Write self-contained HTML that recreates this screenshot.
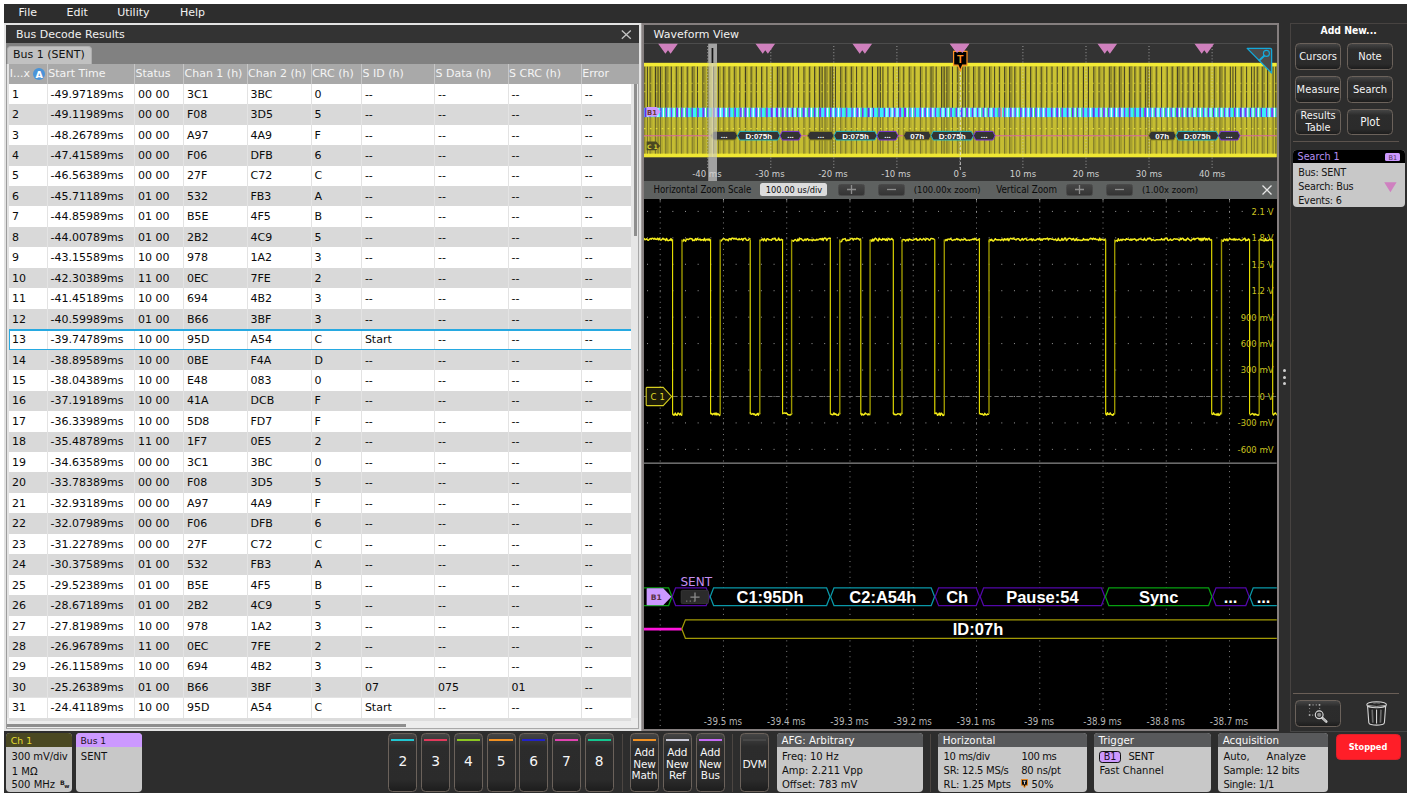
<!DOCTYPE html>
<html lang="en"><head><meta charset="utf-8"><title>Bus Decode Results - Waveform View</title>
<style>
html,body{margin:0;padding:0;background:#fff;}
body{width:1410px;height:795px;position:relative;overflow:hidden;font-family:"DejaVu Sans","Liberation Sans",sans-serif;}
div{position:absolute;box-sizing:border-box;}
svg{position:absolute;overflow:visible;}
.t{white-space:nowrap;}
.btn{border:1px solid #6b625b;border-radius:4.5px;background:linear-gradient(#454545 0,#2c2c2c 22%,#2b2b2b 80%,#1d1d1d 100%);}
.badge{border-radius:4px;background:#c8c8c8;overflow:hidden;}
.bh{left:0;top:0;width:100%;background:#58595b;}
</style></head><body>

<div style="left:4.00px;top:4.00px;width:1403.30px;height:788.60px;background:#2d2d2d;"></div>
<div class="t" style="left:18.60px;top:3.00px;font:normal 11px/20px 'DejaVu Sans','Liberation Sans',sans-serif;color:#f2f2f2;">File</div>
<div class="t" style="left:66.60px;top:3.00px;font:normal 11px/20px 'DejaVu Sans','Liberation Sans',sans-serif;color:#f2f2f2;">Edit</div>
<div class="t" style="left:117.20px;top:3.00px;font:normal 11px/20px 'DejaVu Sans','Liberation Sans',sans-serif;color:#f2f2f2;">Utility</div>
<div class="t" style="left:180.00px;top:3.00px;font:normal 11px/20px 'DejaVu Sans','Liberation Sans',sans-serif;color:#f2f2f2;">Help</div>
<div style="left:4.00px;top:23.00px;width:637.20px;height:708.00px;background:#e3e3e3;"></div>
<div style="left:6.20px;top:25.20px;width:632.60px;height:18.00px;background:#333333;"></div>
<div class="t" style="left:16.00px;top:25.00px;font:normal 11px/20px 'DejaVu Sans','Liberation Sans',sans-serif;color:#f0f0f0;">Bus Decode Results</div>
<svg style="left:621px;top:30px" width="11" height="10" viewBox="0 0 11 10"><path d="M0.8 0.6 L9.8 8.8 M9.8 0.6 L0.8 8.8" stroke="#c4c4c4" stroke-width="1.3" fill="none"/></svg>
<div style="left:6.20px;top:43.20px;width:632.60px;height:20.80px;background:#818181;"></div>
<div style="left:6.50px;top:45.70px;width:85.00px;height:18.70px;background:#c1c1c1;border:1px solid #adadad;border-bottom:none;border-radius:4px 4px 0 0;"></div>
<div class="t" style="left:13.00px;top:45.00px;font:normal 11px/20px 'DejaVu Sans','Liberation Sans',sans-serif;color:#111;">Bus 1 (SENT)</div>
<div style="left:6.10px;top:64.00px;width:1.00px;height:664.90px;background:#9c9c9c;"></div>
<div style="left:8.50px;top:64.00px;width:630.30px;height:19.70px;background:#a9a9a9;"></div>
<div class="t" style="left:9.70px;top:64.00px;font:normal 11px/20px 'DejaVu Sans','Liberation Sans',sans-serif;color:#f4f4f4;">I...x</div>
<div style="left:46.70px;top:64.00px;width:1.00px;height:19.70px;background:#c6c6c6;"></div>
<div class="t" style="left:48.20px;top:64.00px;font:normal 11px/20px 'DejaVu Sans','Liberation Sans',sans-serif;color:#f4f4f4;">Start Time</div>
<div style="left:134.00px;top:64.00px;width:1.00px;height:19.70px;background:#c6c6c6;"></div>
<div class="t" style="left:135.50px;top:64.00px;font:normal 11px/20px 'DejaVu Sans','Liberation Sans',sans-serif;color:#f4f4f4;">Status</div>
<div style="left:183.00px;top:64.00px;width:1.00px;height:19.70px;background:#c6c6c6;"></div>
<div class="t" style="left:184.50px;top:64.00px;font:normal 11px/20px 'DejaVu Sans','Liberation Sans',sans-serif;color:#f4f4f4;">Chan 1 (h)</div>
<div style="left:246.60px;top:64.00px;width:1.00px;height:19.70px;background:#c6c6c6;"></div>
<div class="t" style="left:248.10px;top:64.00px;font:normal 11px/20px 'DejaVu Sans','Liberation Sans',sans-serif;color:#f4f4f4;">Chan 2 (h)</div>
<div style="left:310.70px;top:64.00px;width:1.00px;height:19.70px;background:#c6c6c6;"></div>
<div class="t" style="left:312.20px;top:64.00px;font:normal 11px/20px 'DejaVu Sans','Liberation Sans',sans-serif;color:#f4f4f4;">CRC (h)</div>
<div style="left:361.00px;top:64.00px;width:1.00px;height:19.70px;background:#c6c6c6;"></div>
<div class="t" style="left:362.50px;top:64.00px;font:normal 11px/20px 'DejaVu Sans','Liberation Sans',sans-serif;color:#f4f4f4;">S ID (h)</div>
<div style="left:434.10px;top:64.00px;width:1.00px;height:19.70px;background:#c6c6c6;"></div>
<div class="t" style="left:435.60px;top:64.00px;font:normal 11px/20px 'DejaVu Sans','Liberation Sans',sans-serif;color:#f4f4f4;">S Data (h)</div>
<div style="left:507.60px;top:64.00px;width:1.00px;height:19.70px;background:#c6c6c6;"></div>
<div class="t" style="left:509.10px;top:64.00px;font:normal 11px/20px 'DejaVu Sans','Liberation Sans',sans-serif;color:#f4f4f4;">S CRC (h)</div>
<div style="left:580.80px;top:64.00px;width:1.00px;height:19.70px;background:#c6c6c6;"></div>
<div class="t" style="left:582.30px;top:64.00px;font:normal 11px/20px 'DejaVu Sans','Liberation Sans',sans-serif;color:#f4f4f4;">Error</div>
<div style="left:33.20px;top:67.60px;width:12.00px;height:12.00px;background:#4a94d8;border-radius:50%;"></div>
<div class="t" style="left:-110.80px;width:300px;text-align:center;top:65.00px;font:bold 9.5px/20px 'DejaVu Sans','Liberation Sans',sans-serif;color:#fff;">A</div>
<div style="left:8.50px;top:83.70px;width:622.30px;height:20.46px;background:#ffffff;"></div>
<div class="t" style="left:12.10px;top:85.00px;font:normal 11px/20px 'DejaVu Sans','Liberation Sans',sans-serif;color:#0a0a0a;">1</div>
<div class="t" style="left:50.60px;top:85.00px;font:normal 11px/20px 'DejaVu Sans','Liberation Sans',sans-serif;color:#0a0a0a;">-49.97189ms</div>
<div class="t" style="left:137.90px;top:85.00px;font:normal 11px/20px 'DejaVu Sans','Liberation Sans',sans-serif;color:#0a0a0a;">00 00</div>
<div class="t" style="left:186.90px;top:85.00px;font:normal 11px/20px 'DejaVu Sans','Liberation Sans',sans-serif;color:#0a0a0a;">3C1</div>
<div class="t" style="left:250.50px;top:85.00px;font:normal 11px/20px 'DejaVu Sans','Liberation Sans',sans-serif;color:#0a0a0a;">3BC</div>
<div class="t" style="left:314.60px;top:85.00px;font:normal 11px/20px 'DejaVu Sans','Liberation Sans',sans-serif;color:#0a0a0a;">0</div>
<div class="t" style="left:364.90px;top:85.00px;font:normal 11px/20px 'DejaVu Sans','Liberation Sans',sans-serif;color:#0a0a0a;">--</div>
<div class="t" style="left:438.00px;top:85.00px;font:normal 11px/20px 'DejaVu Sans','Liberation Sans',sans-serif;color:#0a0a0a;">--</div>
<div class="t" style="left:511.50px;top:85.00px;font:normal 11px/20px 'DejaVu Sans','Liberation Sans',sans-serif;color:#0a0a0a;">--</div>
<div class="t" style="left:584.70px;top:85.00px;font:normal 11px/20px 'DejaVu Sans','Liberation Sans',sans-serif;color:#0a0a0a;">--</div>
<div style="left:8.50px;top:104.16px;width:622.30px;height:20.46px;background:#d9d9d9;"></div>
<div class="t" style="left:12.10px;top:105.00px;font:normal 11px/20px 'DejaVu Sans','Liberation Sans',sans-serif;color:#0a0a0a;">2</div>
<div class="t" style="left:50.60px;top:105.00px;font:normal 11px/20px 'DejaVu Sans','Liberation Sans',sans-serif;color:#0a0a0a;">-49.11989ms</div>
<div class="t" style="left:137.90px;top:105.00px;font:normal 11px/20px 'DejaVu Sans','Liberation Sans',sans-serif;color:#0a0a0a;">00 00</div>
<div class="t" style="left:186.90px;top:105.00px;font:normal 11px/20px 'DejaVu Sans','Liberation Sans',sans-serif;color:#0a0a0a;">F08</div>
<div class="t" style="left:250.50px;top:105.00px;font:normal 11px/20px 'DejaVu Sans','Liberation Sans',sans-serif;color:#0a0a0a;">3D5</div>
<div class="t" style="left:314.60px;top:105.00px;font:normal 11px/20px 'DejaVu Sans','Liberation Sans',sans-serif;color:#0a0a0a;">5</div>
<div class="t" style="left:364.90px;top:105.00px;font:normal 11px/20px 'DejaVu Sans','Liberation Sans',sans-serif;color:#0a0a0a;">--</div>
<div class="t" style="left:438.00px;top:105.00px;font:normal 11px/20px 'DejaVu Sans','Liberation Sans',sans-serif;color:#0a0a0a;">--</div>
<div class="t" style="left:511.50px;top:105.00px;font:normal 11px/20px 'DejaVu Sans','Liberation Sans',sans-serif;color:#0a0a0a;">--</div>
<div class="t" style="left:584.70px;top:105.00px;font:normal 11px/20px 'DejaVu Sans','Liberation Sans',sans-serif;color:#0a0a0a;">--</div>
<div style="left:8.50px;top:124.62px;width:622.30px;height:20.46px;background:#ffffff;"></div>
<div class="t" style="left:12.10px;top:126.00px;font:normal 11px/20px 'DejaVu Sans','Liberation Sans',sans-serif;color:#0a0a0a;">3</div>
<div class="t" style="left:50.60px;top:126.00px;font:normal 11px/20px 'DejaVu Sans','Liberation Sans',sans-serif;color:#0a0a0a;">-48.26789ms</div>
<div class="t" style="left:137.90px;top:126.00px;font:normal 11px/20px 'DejaVu Sans','Liberation Sans',sans-serif;color:#0a0a0a;">00 00</div>
<div class="t" style="left:186.90px;top:126.00px;font:normal 11px/20px 'DejaVu Sans','Liberation Sans',sans-serif;color:#0a0a0a;">A97</div>
<div class="t" style="left:250.50px;top:126.00px;font:normal 11px/20px 'DejaVu Sans','Liberation Sans',sans-serif;color:#0a0a0a;">4A9</div>
<div class="t" style="left:314.60px;top:126.00px;font:normal 11px/20px 'DejaVu Sans','Liberation Sans',sans-serif;color:#0a0a0a;">F</div>
<div class="t" style="left:364.90px;top:126.00px;font:normal 11px/20px 'DejaVu Sans','Liberation Sans',sans-serif;color:#0a0a0a;">--</div>
<div class="t" style="left:438.00px;top:126.00px;font:normal 11px/20px 'DejaVu Sans','Liberation Sans',sans-serif;color:#0a0a0a;">--</div>
<div class="t" style="left:511.50px;top:126.00px;font:normal 11px/20px 'DejaVu Sans','Liberation Sans',sans-serif;color:#0a0a0a;">--</div>
<div class="t" style="left:584.70px;top:126.00px;font:normal 11px/20px 'DejaVu Sans','Liberation Sans',sans-serif;color:#0a0a0a;">--</div>
<div style="left:8.50px;top:145.08px;width:622.30px;height:20.46px;background:#d9d9d9;"></div>
<div class="t" style="left:12.10px;top:146.00px;font:normal 11px/20px 'DejaVu Sans','Liberation Sans',sans-serif;color:#0a0a0a;">4</div>
<div class="t" style="left:50.60px;top:146.00px;font:normal 11px/20px 'DejaVu Sans','Liberation Sans',sans-serif;color:#0a0a0a;">-47.41589ms</div>
<div class="t" style="left:137.90px;top:146.00px;font:normal 11px/20px 'DejaVu Sans','Liberation Sans',sans-serif;color:#0a0a0a;">00 00</div>
<div class="t" style="left:186.90px;top:146.00px;font:normal 11px/20px 'DejaVu Sans','Liberation Sans',sans-serif;color:#0a0a0a;">F06</div>
<div class="t" style="left:250.50px;top:146.00px;font:normal 11px/20px 'DejaVu Sans','Liberation Sans',sans-serif;color:#0a0a0a;">DFB</div>
<div class="t" style="left:314.60px;top:146.00px;font:normal 11px/20px 'DejaVu Sans','Liberation Sans',sans-serif;color:#0a0a0a;">6</div>
<div class="t" style="left:364.90px;top:146.00px;font:normal 11px/20px 'DejaVu Sans','Liberation Sans',sans-serif;color:#0a0a0a;">--</div>
<div class="t" style="left:438.00px;top:146.00px;font:normal 11px/20px 'DejaVu Sans','Liberation Sans',sans-serif;color:#0a0a0a;">--</div>
<div class="t" style="left:511.50px;top:146.00px;font:normal 11px/20px 'DejaVu Sans','Liberation Sans',sans-serif;color:#0a0a0a;">--</div>
<div class="t" style="left:584.70px;top:146.00px;font:normal 11px/20px 'DejaVu Sans','Liberation Sans',sans-serif;color:#0a0a0a;">--</div>
<div style="left:8.50px;top:165.54px;width:622.30px;height:20.46px;background:#ffffff;"></div>
<div class="t" style="left:12.10px;top:166.00px;font:normal 11px/20px 'DejaVu Sans','Liberation Sans',sans-serif;color:#0a0a0a;">5</div>
<div class="t" style="left:50.60px;top:166.00px;font:normal 11px/20px 'DejaVu Sans','Liberation Sans',sans-serif;color:#0a0a0a;">-46.56389ms</div>
<div class="t" style="left:137.90px;top:166.00px;font:normal 11px/20px 'DejaVu Sans','Liberation Sans',sans-serif;color:#0a0a0a;">00 00</div>
<div class="t" style="left:186.90px;top:166.00px;font:normal 11px/20px 'DejaVu Sans','Liberation Sans',sans-serif;color:#0a0a0a;">27F</div>
<div class="t" style="left:250.50px;top:166.00px;font:normal 11px/20px 'DejaVu Sans','Liberation Sans',sans-serif;color:#0a0a0a;">C72</div>
<div class="t" style="left:314.60px;top:166.00px;font:normal 11px/20px 'DejaVu Sans','Liberation Sans',sans-serif;color:#0a0a0a;">C</div>
<div class="t" style="left:364.90px;top:166.00px;font:normal 11px/20px 'DejaVu Sans','Liberation Sans',sans-serif;color:#0a0a0a;">--</div>
<div class="t" style="left:438.00px;top:166.00px;font:normal 11px/20px 'DejaVu Sans','Liberation Sans',sans-serif;color:#0a0a0a;">--</div>
<div class="t" style="left:511.50px;top:166.00px;font:normal 11px/20px 'DejaVu Sans','Liberation Sans',sans-serif;color:#0a0a0a;">--</div>
<div class="t" style="left:584.70px;top:166.00px;font:normal 11px/20px 'DejaVu Sans','Liberation Sans',sans-serif;color:#0a0a0a;">--</div>
<div style="left:8.50px;top:186.00px;width:622.30px;height:20.46px;background:#d9d9d9;"></div>
<div class="t" style="left:12.10px;top:187.00px;font:normal 11px/20px 'DejaVu Sans','Liberation Sans',sans-serif;color:#0a0a0a;">6</div>
<div class="t" style="left:50.60px;top:187.00px;font:normal 11px/20px 'DejaVu Sans','Liberation Sans',sans-serif;color:#0a0a0a;">-45.71189ms</div>
<div class="t" style="left:137.90px;top:187.00px;font:normal 11px/20px 'DejaVu Sans','Liberation Sans',sans-serif;color:#0a0a0a;">01 00</div>
<div class="t" style="left:186.90px;top:187.00px;font:normal 11px/20px 'DejaVu Sans','Liberation Sans',sans-serif;color:#0a0a0a;">532</div>
<div class="t" style="left:250.50px;top:187.00px;font:normal 11px/20px 'DejaVu Sans','Liberation Sans',sans-serif;color:#0a0a0a;">FB3</div>
<div class="t" style="left:314.60px;top:187.00px;font:normal 11px/20px 'DejaVu Sans','Liberation Sans',sans-serif;color:#0a0a0a;">A</div>
<div class="t" style="left:364.90px;top:187.00px;font:normal 11px/20px 'DejaVu Sans','Liberation Sans',sans-serif;color:#0a0a0a;">--</div>
<div class="t" style="left:438.00px;top:187.00px;font:normal 11px/20px 'DejaVu Sans','Liberation Sans',sans-serif;color:#0a0a0a;">--</div>
<div class="t" style="left:511.50px;top:187.00px;font:normal 11px/20px 'DejaVu Sans','Liberation Sans',sans-serif;color:#0a0a0a;">--</div>
<div class="t" style="left:584.70px;top:187.00px;font:normal 11px/20px 'DejaVu Sans','Liberation Sans',sans-serif;color:#0a0a0a;">--</div>
<div style="left:8.50px;top:206.46px;width:622.30px;height:20.46px;background:#ffffff;"></div>
<div class="t" style="left:12.10px;top:207.00px;font:normal 11px/20px 'DejaVu Sans','Liberation Sans',sans-serif;color:#0a0a0a;">7</div>
<div class="t" style="left:50.60px;top:207.00px;font:normal 11px/20px 'DejaVu Sans','Liberation Sans',sans-serif;color:#0a0a0a;">-44.85989ms</div>
<div class="t" style="left:137.90px;top:207.00px;font:normal 11px/20px 'DejaVu Sans','Liberation Sans',sans-serif;color:#0a0a0a;">01 00</div>
<div class="t" style="left:186.90px;top:207.00px;font:normal 11px/20px 'DejaVu Sans','Liberation Sans',sans-serif;color:#0a0a0a;">B5E</div>
<div class="t" style="left:250.50px;top:207.00px;font:normal 11px/20px 'DejaVu Sans','Liberation Sans',sans-serif;color:#0a0a0a;">4F5</div>
<div class="t" style="left:314.60px;top:207.00px;font:normal 11px/20px 'DejaVu Sans','Liberation Sans',sans-serif;color:#0a0a0a;">B</div>
<div class="t" style="left:364.90px;top:207.00px;font:normal 11px/20px 'DejaVu Sans','Liberation Sans',sans-serif;color:#0a0a0a;">--</div>
<div class="t" style="left:438.00px;top:207.00px;font:normal 11px/20px 'DejaVu Sans','Liberation Sans',sans-serif;color:#0a0a0a;">--</div>
<div class="t" style="left:511.50px;top:207.00px;font:normal 11px/20px 'DejaVu Sans','Liberation Sans',sans-serif;color:#0a0a0a;">--</div>
<div class="t" style="left:584.70px;top:207.00px;font:normal 11px/20px 'DejaVu Sans','Liberation Sans',sans-serif;color:#0a0a0a;">--</div>
<div style="left:8.50px;top:226.92px;width:622.30px;height:20.46px;background:#d9d9d9;"></div>
<div class="t" style="left:12.10px;top:228.00px;font:normal 11px/20px 'DejaVu Sans','Liberation Sans',sans-serif;color:#0a0a0a;">8</div>
<div class="t" style="left:50.60px;top:228.00px;font:normal 11px/20px 'DejaVu Sans','Liberation Sans',sans-serif;color:#0a0a0a;">-44.00789ms</div>
<div class="t" style="left:137.90px;top:228.00px;font:normal 11px/20px 'DejaVu Sans','Liberation Sans',sans-serif;color:#0a0a0a;">01 00</div>
<div class="t" style="left:186.90px;top:228.00px;font:normal 11px/20px 'DejaVu Sans','Liberation Sans',sans-serif;color:#0a0a0a;">2B2</div>
<div class="t" style="left:250.50px;top:228.00px;font:normal 11px/20px 'DejaVu Sans','Liberation Sans',sans-serif;color:#0a0a0a;">4C9</div>
<div class="t" style="left:314.60px;top:228.00px;font:normal 11px/20px 'DejaVu Sans','Liberation Sans',sans-serif;color:#0a0a0a;">5</div>
<div class="t" style="left:364.90px;top:228.00px;font:normal 11px/20px 'DejaVu Sans','Liberation Sans',sans-serif;color:#0a0a0a;">--</div>
<div class="t" style="left:438.00px;top:228.00px;font:normal 11px/20px 'DejaVu Sans','Liberation Sans',sans-serif;color:#0a0a0a;">--</div>
<div class="t" style="left:511.50px;top:228.00px;font:normal 11px/20px 'DejaVu Sans','Liberation Sans',sans-serif;color:#0a0a0a;">--</div>
<div class="t" style="left:584.70px;top:228.00px;font:normal 11px/20px 'DejaVu Sans','Liberation Sans',sans-serif;color:#0a0a0a;">--</div>
<div style="left:8.50px;top:247.38px;width:622.30px;height:20.46px;background:#ffffff;"></div>
<div class="t" style="left:12.10px;top:248.00px;font:normal 11px/20px 'DejaVu Sans','Liberation Sans',sans-serif;color:#0a0a0a;">9</div>
<div class="t" style="left:50.60px;top:248.00px;font:normal 11px/20px 'DejaVu Sans','Liberation Sans',sans-serif;color:#0a0a0a;">-43.15589ms</div>
<div class="t" style="left:137.90px;top:248.00px;font:normal 11px/20px 'DejaVu Sans','Liberation Sans',sans-serif;color:#0a0a0a;">10 00</div>
<div class="t" style="left:186.90px;top:248.00px;font:normal 11px/20px 'DejaVu Sans','Liberation Sans',sans-serif;color:#0a0a0a;">978</div>
<div class="t" style="left:250.50px;top:248.00px;font:normal 11px/20px 'DejaVu Sans','Liberation Sans',sans-serif;color:#0a0a0a;">1A2</div>
<div class="t" style="left:314.60px;top:248.00px;font:normal 11px/20px 'DejaVu Sans','Liberation Sans',sans-serif;color:#0a0a0a;">3</div>
<div class="t" style="left:364.90px;top:248.00px;font:normal 11px/20px 'DejaVu Sans','Liberation Sans',sans-serif;color:#0a0a0a;">--</div>
<div class="t" style="left:438.00px;top:248.00px;font:normal 11px/20px 'DejaVu Sans','Liberation Sans',sans-serif;color:#0a0a0a;">--</div>
<div class="t" style="left:511.50px;top:248.00px;font:normal 11px/20px 'DejaVu Sans','Liberation Sans',sans-serif;color:#0a0a0a;">--</div>
<div class="t" style="left:584.70px;top:248.00px;font:normal 11px/20px 'DejaVu Sans','Liberation Sans',sans-serif;color:#0a0a0a;">--</div>
<div style="left:8.50px;top:267.84px;width:622.30px;height:20.46px;background:#d9d9d9;"></div>
<div class="t" style="left:12.10px;top:269.00px;font:normal 11px/20px 'DejaVu Sans','Liberation Sans',sans-serif;color:#0a0a0a;">10</div>
<div class="t" style="left:50.60px;top:269.00px;font:normal 11px/20px 'DejaVu Sans','Liberation Sans',sans-serif;color:#0a0a0a;">-42.30389ms</div>
<div class="t" style="left:137.90px;top:269.00px;font:normal 11px/20px 'DejaVu Sans','Liberation Sans',sans-serif;color:#0a0a0a;">11 00</div>
<div class="t" style="left:186.90px;top:269.00px;font:normal 11px/20px 'DejaVu Sans','Liberation Sans',sans-serif;color:#0a0a0a;">0EC</div>
<div class="t" style="left:250.50px;top:269.00px;font:normal 11px/20px 'DejaVu Sans','Liberation Sans',sans-serif;color:#0a0a0a;">7FE</div>
<div class="t" style="left:314.60px;top:269.00px;font:normal 11px/20px 'DejaVu Sans','Liberation Sans',sans-serif;color:#0a0a0a;">2</div>
<div class="t" style="left:364.90px;top:269.00px;font:normal 11px/20px 'DejaVu Sans','Liberation Sans',sans-serif;color:#0a0a0a;">--</div>
<div class="t" style="left:438.00px;top:269.00px;font:normal 11px/20px 'DejaVu Sans','Liberation Sans',sans-serif;color:#0a0a0a;">--</div>
<div class="t" style="left:511.50px;top:269.00px;font:normal 11px/20px 'DejaVu Sans','Liberation Sans',sans-serif;color:#0a0a0a;">--</div>
<div class="t" style="left:584.70px;top:269.00px;font:normal 11px/20px 'DejaVu Sans','Liberation Sans',sans-serif;color:#0a0a0a;">--</div>
<div style="left:8.50px;top:288.30px;width:622.30px;height:20.46px;background:#ffffff;"></div>
<div class="t" style="left:12.10px;top:289.00px;font:normal 11px/20px 'DejaVu Sans','Liberation Sans',sans-serif;color:#0a0a0a;">11</div>
<div class="t" style="left:50.60px;top:289.00px;font:normal 11px/20px 'DejaVu Sans','Liberation Sans',sans-serif;color:#0a0a0a;">-41.45189ms</div>
<div class="t" style="left:137.90px;top:289.00px;font:normal 11px/20px 'DejaVu Sans','Liberation Sans',sans-serif;color:#0a0a0a;">10 00</div>
<div class="t" style="left:186.90px;top:289.00px;font:normal 11px/20px 'DejaVu Sans','Liberation Sans',sans-serif;color:#0a0a0a;">694</div>
<div class="t" style="left:250.50px;top:289.00px;font:normal 11px/20px 'DejaVu Sans','Liberation Sans',sans-serif;color:#0a0a0a;">4B2</div>
<div class="t" style="left:314.60px;top:289.00px;font:normal 11px/20px 'DejaVu Sans','Liberation Sans',sans-serif;color:#0a0a0a;">3</div>
<div class="t" style="left:364.90px;top:289.00px;font:normal 11px/20px 'DejaVu Sans','Liberation Sans',sans-serif;color:#0a0a0a;">--</div>
<div class="t" style="left:438.00px;top:289.00px;font:normal 11px/20px 'DejaVu Sans','Liberation Sans',sans-serif;color:#0a0a0a;">--</div>
<div class="t" style="left:511.50px;top:289.00px;font:normal 11px/20px 'DejaVu Sans','Liberation Sans',sans-serif;color:#0a0a0a;">--</div>
<div class="t" style="left:584.70px;top:289.00px;font:normal 11px/20px 'DejaVu Sans','Liberation Sans',sans-serif;color:#0a0a0a;">--</div>
<div style="left:8.50px;top:308.76px;width:622.30px;height:20.46px;background:#d9d9d9;"></div>
<div class="t" style="left:12.10px;top:310.00px;font:normal 11px/20px 'DejaVu Sans','Liberation Sans',sans-serif;color:#0a0a0a;">12</div>
<div class="t" style="left:50.60px;top:310.00px;font:normal 11px/20px 'DejaVu Sans','Liberation Sans',sans-serif;color:#0a0a0a;">-40.59989ms</div>
<div class="t" style="left:137.90px;top:310.00px;font:normal 11px/20px 'DejaVu Sans','Liberation Sans',sans-serif;color:#0a0a0a;">01 00</div>
<div class="t" style="left:186.90px;top:310.00px;font:normal 11px/20px 'DejaVu Sans','Liberation Sans',sans-serif;color:#0a0a0a;">B66</div>
<div class="t" style="left:250.50px;top:310.00px;font:normal 11px/20px 'DejaVu Sans','Liberation Sans',sans-serif;color:#0a0a0a;">3BF</div>
<div class="t" style="left:314.60px;top:310.00px;font:normal 11px/20px 'DejaVu Sans','Liberation Sans',sans-serif;color:#0a0a0a;">3</div>
<div class="t" style="left:364.90px;top:310.00px;font:normal 11px/20px 'DejaVu Sans','Liberation Sans',sans-serif;color:#0a0a0a;">--</div>
<div class="t" style="left:438.00px;top:310.00px;font:normal 11px/20px 'DejaVu Sans','Liberation Sans',sans-serif;color:#0a0a0a;">--</div>
<div class="t" style="left:511.50px;top:310.00px;font:normal 11px/20px 'DejaVu Sans','Liberation Sans',sans-serif;color:#0a0a0a;">--</div>
<div class="t" style="left:584.70px;top:310.00px;font:normal 11px/20px 'DejaVu Sans','Liberation Sans',sans-serif;color:#0a0a0a;">--</div>
<div style="left:8.50px;top:329.22px;width:622.30px;height:20.46px;background:#ffffff;"></div>
<div class="t" style="left:12.10px;top:330.00px;font:normal 11px/20px 'DejaVu Sans','Liberation Sans',sans-serif;color:#0a0a0a;">13</div>
<div class="t" style="left:50.60px;top:330.00px;font:normal 11px/20px 'DejaVu Sans','Liberation Sans',sans-serif;color:#0a0a0a;">-39.74789ms</div>
<div class="t" style="left:137.90px;top:330.00px;font:normal 11px/20px 'DejaVu Sans','Liberation Sans',sans-serif;color:#0a0a0a;">10 00</div>
<div class="t" style="left:186.90px;top:330.00px;font:normal 11px/20px 'DejaVu Sans','Liberation Sans',sans-serif;color:#0a0a0a;">95D</div>
<div class="t" style="left:250.50px;top:330.00px;font:normal 11px/20px 'DejaVu Sans','Liberation Sans',sans-serif;color:#0a0a0a;">A54</div>
<div class="t" style="left:314.60px;top:330.00px;font:normal 11px/20px 'DejaVu Sans','Liberation Sans',sans-serif;color:#0a0a0a;">C</div>
<div class="t" style="left:364.90px;top:330.00px;font:normal 11px/20px 'DejaVu Sans','Liberation Sans',sans-serif;color:#0a0a0a;">Start</div>
<div class="t" style="left:438.00px;top:330.00px;font:normal 11px/20px 'DejaVu Sans','Liberation Sans',sans-serif;color:#0a0a0a;">--</div>
<div class="t" style="left:511.50px;top:330.00px;font:normal 11px/20px 'DejaVu Sans','Liberation Sans',sans-serif;color:#0a0a0a;">--</div>
<div class="t" style="left:584.70px;top:330.00px;font:normal 11px/20px 'DejaVu Sans','Liberation Sans',sans-serif;color:#0a0a0a;">--</div>
<div style="left:8.50px;top:349.68px;width:622.30px;height:20.46px;background:#d9d9d9;"></div>
<div class="t" style="left:12.10px;top:351.00px;font:normal 11px/20px 'DejaVu Sans','Liberation Sans',sans-serif;color:#0a0a0a;">14</div>
<div class="t" style="left:50.60px;top:351.00px;font:normal 11px/20px 'DejaVu Sans','Liberation Sans',sans-serif;color:#0a0a0a;">-38.89589ms</div>
<div class="t" style="left:137.90px;top:351.00px;font:normal 11px/20px 'DejaVu Sans','Liberation Sans',sans-serif;color:#0a0a0a;">10 00</div>
<div class="t" style="left:186.90px;top:351.00px;font:normal 11px/20px 'DejaVu Sans','Liberation Sans',sans-serif;color:#0a0a0a;">0BE</div>
<div class="t" style="left:250.50px;top:351.00px;font:normal 11px/20px 'DejaVu Sans','Liberation Sans',sans-serif;color:#0a0a0a;">F4A</div>
<div class="t" style="left:314.60px;top:351.00px;font:normal 11px/20px 'DejaVu Sans','Liberation Sans',sans-serif;color:#0a0a0a;">D</div>
<div class="t" style="left:364.90px;top:351.00px;font:normal 11px/20px 'DejaVu Sans','Liberation Sans',sans-serif;color:#0a0a0a;">--</div>
<div class="t" style="left:438.00px;top:351.00px;font:normal 11px/20px 'DejaVu Sans','Liberation Sans',sans-serif;color:#0a0a0a;">--</div>
<div class="t" style="left:511.50px;top:351.00px;font:normal 11px/20px 'DejaVu Sans','Liberation Sans',sans-serif;color:#0a0a0a;">--</div>
<div class="t" style="left:584.70px;top:351.00px;font:normal 11px/20px 'DejaVu Sans','Liberation Sans',sans-serif;color:#0a0a0a;">--</div>
<div style="left:8.50px;top:370.14px;width:622.30px;height:20.46px;background:#ffffff;"></div>
<div class="t" style="left:12.10px;top:371.00px;font:normal 11px/20px 'DejaVu Sans','Liberation Sans',sans-serif;color:#0a0a0a;">15</div>
<div class="t" style="left:50.60px;top:371.00px;font:normal 11px/20px 'DejaVu Sans','Liberation Sans',sans-serif;color:#0a0a0a;">-38.04389ms</div>
<div class="t" style="left:137.90px;top:371.00px;font:normal 11px/20px 'DejaVu Sans','Liberation Sans',sans-serif;color:#0a0a0a;">10 00</div>
<div class="t" style="left:186.90px;top:371.00px;font:normal 11px/20px 'DejaVu Sans','Liberation Sans',sans-serif;color:#0a0a0a;">E48</div>
<div class="t" style="left:250.50px;top:371.00px;font:normal 11px/20px 'DejaVu Sans','Liberation Sans',sans-serif;color:#0a0a0a;">083</div>
<div class="t" style="left:314.60px;top:371.00px;font:normal 11px/20px 'DejaVu Sans','Liberation Sans',sans-serif;color:#0a0a0a;">0</div>
<div class="t" style="left:364.90px;top:371.00px;font:normal 11px/20px 'DejaVu Sans','Liberation Sans',sans-serif;color:#0a0a0a;">--</div>
<div class="t" style="left:438.00px;top:371.00px;font:normal 11px/20px 'DejaVu Sans','Liberation Sans',sans-serif;color:#0a0a0a;">--</div>
<div class="t" style="left:511.50px;top:371.00px;font:normal 11px/20px 'DejaVu Sans','Liberation Sans',sans-serif;color:#0a0a0a;">--</div>
<div class="t" style="left:584.70px;top:371.00px;font:normal 11px/20px 'DejaVu Sans','Liberation Sans',sans-serif;color:#0a0a0a;">--</div>
<div style="left:8.50px;top:390.60px;width:622.30px;height:20.46px;background:#d9d9d9;"></div>
<div class="t" style="left:12.10px;top:391.00px;font:normal 11px/20px 'DejaVu Sans','Liberation Sans',sans-serif;color:#0a0a0a;">16</div>
<div class="t" style="left:50.60px;top:391.00px;font:normal 11px/20px 'DejaVu Sans','Liberation Sans',sans-serif;color:#0a0a0a;">-37.19189ms</div>
<div class="t" style="left:137.90px;top:391.00px;font:normal 11px/20px 'DejaVu Sans','Liberation Sans',sans-serif;color:#0a0a0a;">10 00</div>
<div class="t" style="left:186.90px;top:391.00px;font:normal 11px/20px 'DejaVu Sans','Liberation Sans',sans-serif;color:#0a0a0a;">41A</div>
<div class="t" style="left:250.50px;top:391.00px;font:normal 11px/20px 'DejaVu Sans','Liberation Sans',sans-serif;color:#0a0a0a;">DCB</div>
<div class="t" style="left:314.60px;top:391.00px;font:normal 11px/20px 'DejaVu Sans','Liberation Sans',sans-serif;color:#0a0a0a;">F</div>
<div class="t" style="left:364.90px;top:391.00px;font:normal 11px/20px 'DejaVu Sans','Liberation Sans',sans-serif;color:#0a0a0a;">--</div>
<div class="t" style="left:438.00px;top:391.00px;font:normal 11px/20px 'DejaVu Sans','Liberation Sans',sans-serif;color:#0a0a0a;">--</div>
<div class="t" style="left:511.50px;top:391.00px;font:normal 11px/20px 'DejaVu Sans','Liberation Sans',sans-serif;color:#0a0a0a;">--</div>
<div class="t" style="left:584.70px;top:391.00px;font:normal 11px/20px 'DejaVu Sans','Liberation Sans',sans-serif;color:#0a0a0a;">--</div>
<div style="left:8.50px;top:411.06px;width:622.30px;height:20.46px;background:#ffffff;"></div>
<div class="t" style="left:12.10px;top:412.00px;font:normal 11px/20px 'DejaVu Sans','Liberation Sans',sans-serif;color:#0a0a0a;">17</div>
<div class="t" style="left:50.60px;top:412.00px;font:normal 11px/20px 'DejaVu Sans','Liberation Sans',sans-serif;color:#0a0a0a;">-36.33989ms</div>
<div class="t" style="left:137.90px;top:412.00px;font:normal 11px/20px 'DejaVu Sans','Liberation Sans',sans-serif;color:#0a0a0a;">10 00</div>
<div class="t" style="left:186.90px;top:412.00px;font:normal 11px/20px 'DejaVu Sans','Liberation Sans',sans-serif;color:#0a0a0a;">5D8</div>
<div class="t" style="left:250.50px;top:412.00px;font:normal 11px/20px 'DejaVu Sans','Liberation Sans',sans-serif;color:#0a0a0a;">FD7</div>
<div class="t" style="left:314.60px;top:412.00px;font:normal 11px/20px 'DejaVu Sans','Liberation Sans',sans-serif;color:#0a0a0a;">F</div>
<div class="t" style="left:364.90px;top:412.00px;font:normal 11px/20px 'DejaVu Sans','Liberation Sans',sans-serif;color:#0a0a0a;">--</div>
<div class="t" style="left:438.00px;top:412.00px;font:normal 11px/20px 'DejaVu Sans','Liberation Sans',sans-serif;color:#0a0a0a;">--</div>
<div class="t" style="left:511.50px;top:412.00px;font:normal 11px/20px 'DejaVu Sans','Liberation Sans',sans-serif;color:#0a0a0a;">--</div>
<div class="t" style="left:584.70px;top:412.00px;font:normal 11px/20px 'DejaVu Sans','Liberation Sans',sans-serif;color:#0a0a0a;">--</div>
<div style="left:8.50px;top:431.52px;width:622.30px;height:20.46px;background:#d9d9d9;"></div>
<div class="t" style="left:12.10px;top:432.00px;font:normal 11px/20px 'DejaVu Sans','Liberation Sans',sans-serif;color:#0a0a0a;">18</div>
<div class="t" style="left:50.60px;top:432.00px;font:normal 11px/20px 'DejaVu Sans','Liberation Sans',sans-serif;color:#0a0a0a;">-35.48789ms</div>
<div class="t" style="left:137.90px;top:432.00px;font:normal 11px/20px 'DejaVu Sans','Liberation Sans',sans-serif;color:#0a0a0a;">11 00</div>
<div class="t" style="left:186.90px;top:432.00px;font:normal 11px/20px 'DejaVu Sans','Liberation Sans',sans-serif;color:#0a0a0a;">1F7</div>
<div class="t" style="left:250.50px;top:432.00px;font:normal 11px/20px 'DejaVu Sans','Liberation Sans',sans-serif;color:#0a0a0a;">0E5</div>
<div class="t" style="left:314.60px;top:432.00px;font:normal 11px/20px 'DejaVu Sans','Liberation Sans',sans-serif;color:#0a0a0a;">2</div>
<div class="t" style="left:364.90px;top:432.00px;font:normal 11px/20px 'DejaVu Sans','Liberation Sans',sans-serif;color:#0a0a0a;">--</div>
<div class="t" style="left:438.00px;top:432.00px;font:normal 11px/20px 'DejaVu Sans','Liberation Sans',sans-serif;color:#0a0a0a;">--</div>
<div class="t" style="left:511.50px;top:432.00px;font:normal 11px/20px 'DejaVu Sans','Liberation Sans',sans-serif;color:#0a0a0a;">--</div>
<div class="t" style="left:584.70px;top:432.00px;font:normal 11px/20px 'DejaVu Sans','Liberation Sans',sans-serif;color:#0a0a0a;">--</div>
<div style="left:8.50px;top:451.98px;width:622.30px;height:20.46px;background:#ffffff;"></div>
<div class="t" style="left:12.10px;top:453.00px;font:normal 11px/20px 'DejaVu Sans','Liberation Sans',sans-serif;color:#0a0a0a;">19</div>
<div class="t" style="left:50.60px;top:453.00px;font:normal 11px/20px 'DejaVu Sans','Liberation Sans',sans-serif;color:#0a0a0a;">-34.63589ms</div>
<div class="t" style="left:137.90px;top:453.00px;font:normal 11px/20px 'DejaVu Sans','Liberation Sans',sans-serif;color:#0a0a0a;">00 00</div>
<div class="t" style="left:186.90px;top:453.00px;font:normal 11px/20px 'DejaVu Sans','Liberation Sans',sans-serif;color:#0a0a0a;">3C1</div>
<div class="t" style="left:250.50px;top:453.00px;font:normal 11px/20px 'DejaVu Sans','Liberation Sans',sans-serif;color:#0a0a0a;">3BC</div>
<div class="t" style="left:314.60px;top:453.00px;font:normal 11px/20px 'DejaVu Sans','Liberation Sans',sans-serif;color:#0a0a0a;">0</div>
<div class="t" style="left:364.90px;top:453.00px;font:normal 11px/20px 'DejaVu Sans','Liberation Sans',sans-serif;color:#0a0a0a;">--</div>
<div class="t" style="left:438.00px;top:453.00px;font:normal 11px/20px 'DejaVu Sans','Liberation Sans',sans-serif;color:#0a0a0a;">--</div>
<div class="t" style="left:511.50px;top:453.00px;font:normal 11px/20px 'DejaVu Sans','Liberation Sans',sans-serif;color:#0a0a0a;">--</div>
<div class="t" style="left:584.70px;top:453.00px;font:normal 11px/20px 'DejaVu Sans','Liberation Sans',sans-serif;color:#0a0a0a;">--</div>
<div style="left:8.50px;top:472.44px;width:622.30px;height:20.46px;background:#d9d9d9;"></div>
<div class="t" style="left:12.10px;top:473.00px;font:normal 11px/20px 'DejaVu Sans','Liberation Sans',sans-serif;color:#0a0a0a;">20</div>
<div class="t" style="left:50.60px;top:473.00px;font:normal 11px/20px 'DejaVu Sans','Liberation Sans',sans-serif;color:#0a0a0a;">-33.78389ms</div>
<div class="t" style="left:137.90px;top:473.00px;font:normal 11px/20px 'DejaVu Sans','Liberation Sans',sans-serif;color:#0a0a0a;">00 00</div>
<div class="t" style="left:186.90px;top:473.00px;font:normal 11px/20px 'DejaVu Sans','Liberation Sans',sans-serif;color:#0a0a0a;">F08</div>
<div class="t" style="left:250.50px;top:473.00px;font:normal 11px/20px 'DejaVu Sans','Liberation Sans',sans-serif;color:#0a0a0a;">3D5</div>
<div class="t" style="left:314.60px;top:473.00px;font:normal 11px/20px 'DejaVu Sans','Liberation Sans',sans-serif;color:#0a0a0a;">5</div>
<div class="t" style="left:364.90px;top:473.00px;font:normal 11px/20px 'DejaVu Sans','Liberation Sans',sans-serif;color:#0a0a0a;">--</div>
<div class="t" style="left:438.00px;top:473.00px;font:normal 11px/20px 'DejaVu Sans','Liberation Sans',sans-serif;color:#0a0a0a;">--</div>
<div class="t" style="left:511.50px;top:473.00px;font:normal 11px/20px 'DejaVu Sans','Liberation Sans',sans-serif;color:#0a0a0a;">--</div>
<div class="t" style="left:584.70px;top:473.00px;font:normal 11px/20px 'DejaVu Sans','Liberation Sans',sans-serif;color:#0a0a0a;">--</div>
<div style="left:8.50px;top:492.90px;width:622.30px;height:20.46px;background:#ffffff;"></div>
<div class="t" style="left:12.10px;top:494.00px;font:normal 11px/20px 'DejaVu Sans','Liberation Sans',sans-serif;color:#0a0a0a;">21</div>
<div class="t" style="left:50.60px;top:494.00px;font:normal 11px/20px 'DejaVu Sans','Liberation Sans',sans-serif;color:#0a0a0a;">-32.93189ms</div>
<div class="t" style="left:137.90px;top:494.00px;font:normal 11px/20px 'DejaVu Sans','Liberation Sans',sans-serif;color:#0a0a0a;">00 00</div>
<div class="t" style="left:186.90px;top:494.00px;font:normal 11px/20px 'DejaVu Sans','Liberation Sans',sans-serif;color:#0a0a0a;">A97</div>
<div class="t" style="left:250.50px;top:494.00px;font:normal 11px/20px 'DejaVu Sans','Liberation Sans',sans-serif;color:#0a0a0a;">4A9</div>
<div class="t" style="left:314.60px;top:494.00px;font:normal 11px/20px 'DejaVu Sans','Liberation Sans',sans-serif;color:#0a0a0a;">F</div>
<div class="t" style="left:364.90px;top:494.00px;font:normal 11px/20px 'DejaVu Sans','Liberation Sans',sans-serif;color:#0a0a0a;">--</div>
<div class="t" style="left:438.00px;top:494.00px;font:normal 11px/20px 'DejaVu Sans','Liberation Sans',sans-serif;color:#0a0a0a;">--</div>
<div class="t" style="left:511.50px;top:494.00px;font:normal 11px/20px 'DejaVu Sans','Liberation Sans',sans-serif;color:#0a0a0a;">--</div>
<div class="t" style="left:584.70px;top:494.00px;font:normal 11px/20px 'DejaVu Sans','Liberation Sans',sans-serif;color:#0a0a0a;">--</div>
<div style="left:8.50px;top:513.36px;width:622.30px;height:20.46px;background:#d9d9d9;"></div>
<div class="t" style="left:12.10px;top:514.00px;font:normal 11px/20px 'DejaVu Sans','Liberation Sans',sans-serif;color:#0a0a0a;">22</div>
<div class="t" style="left:50.60px;top:514.00px;font:normal 11px/20px 'DejaVu Sans','Liberation Sans',sans-serif;color:#0a0a0a;">-32.07989ms</div>
<div class="t" style="left:137.90px;top:514.00px;font:normal 11px/20px 'DejaVu Sans','Liberation Sans',sans-serif;color:#0a0a0a;">00 00</div>
<div class="t" style="left:186.90px;top:514.00px;font:normal 11px/20px 'DejaVu Sans','Liberation Sans',sans-serif;color:#0a0a0a;">F06</div>
<div class="t" style="left:250.50px;top:514.00px;font:normal 11px/20px 'DejaVu Sans','Liberation Sans',sans-serif;color:#0a0a0a;">DFB</div>
<div class="t" style="left:314.60px;top:514.00px;font:normal 11px/20px 'DejaVu Sans','Liberation Sans',sans-serif;color:#0a0a0a;">6</div>
<div class="t" style="left:364.90px;top:514.00px;font:normal 11px/20px 'DejaVu Sans','Liberation Sans',sans-serif;color:#0a0a0a;">--</div>
<div class="t" style="left:438.00px;top:514.00px;font:normal 11px/20px 'DejaVu Sans','Liberation Sans',sans-serif;color:#0a0a0a;">--</div>
<div class="t" style="left:511.50px;top:514.00px;font:normal 11px/20px 'DejaVu Sans','Liberation Sans',sans-serif;color:#0a0a0a;">--</div>
<div class="t" style="left:584.70px;top:514.00px;font:normal 11px/20px 'DejaVu Sans','Liberation Sans',sans-serif;color:#0a0a0a;">--</div>
<div style="left:8.50px;top:533.82px;width:622.30px;height:20.46px;background:#ffffff;"></div>
<div class="t" style="left:12.10px;top:535.00px;font:normal 11px/20px 'DejaVu Sans','Liberation Sans',sans-serif;color:#0a0a0a;">23</div>
<div class="t" style="left:50.60px;top:535.00px;font:normal 11px/20px 'DejaVu Sans','Liberation Sans',sans-serif;color:#0a0a0a;">-31.22789ms</div>
<div class="t" style="left:137.90px;top:535.00px;font:normal 11px/20px 'DejaVu Sans','Liberation Sans',sans-serif;color:#0a0a0a;">00 00</div>
<div class="t" style="left:186.90px;top:535.00px;font:normal 11px/20px 'DejaVu Sans','Liberation Sans',sans-serif;color:#0a0a0a;">27F</div>
<div class="t" style="left:250.50px;top:535.00px;font:normal 11px/20px 'DejaVu Sans','Liberation Sans',sans-serif;color:#0a0a0a;">C72</div>
<div class="t" style="left:314.60px;top:535.00px;font:normal 11px/20px 'DejaVu Sans','Liberation Sans',sans-serif;color:#0a0a0a;">C</div>
<div class="t" style="left:364.90px;top:535.00px;font:normal 11px/20px 'DejaVu Sans','Liberation Sans',sans-serif;color:#0a0a0a;">--</div>
<div class="t" style="left:438.00px;top:535.00px;font:normal 11px/20px 'DejaVu Sans','Liberation Sans',sans-serif;color:#0a0a0a;">--</div>
<div class="t" style="left:511.50px;top:535.00px;font:normal 11px/20px 'DejaVu Sans','Liberation Sans',sans-serif;color:#0a0a0a;">--</div>
<div class="t" style="left:584.70px;top:535.00px;font:normal 11px/20px 'DejaVu Sans','Liberation Sans',sans-serif;color:#0a0a0a;">--</div>
<div style="left:8.50px;top:554.28px;width:622.30px;height:20.46px;background:#d9d9d9;"></div>
<div class="t" style="left:12.10px;top:555.00px;font:normal 11px/20px 'DejaVu Sans','Liberation Sans',sans-serif;color:#0a0a0a;">24</div>
<div class="t" style="left:50.60px;top:555.00px;font:normal 11px/20px 'DejaVu Sans','Liberation Sans',sans-serif;color:#0a0a0a;">-30.37589ms</div>
<div class="t" style="left:137.90px;top:555.00px;font:normal 11px/20px 'DejaVu Sans','Liberation Sans',sans-serif;color:#0a0a0a;">01 00</div>
<div class="t" style="left:186.90px;top:555.00px;font:normal 11px/20px 'DejaVu Sans','Liberation Sans',sans-serif;color:#0a0a0a;">532</div>
<div class="t" style="left:250.50px;top:555.00px;font:normal 11px/20px 'DejaVu Sans','Liberation Sans',sans-serif;color:#0a0a0a;">FB3</div>
<div class="t" style="left:314.60px;top:555.00px;font:normal 11px/20px 'DejaVu Sans','Liberation Sans',sans-serif;color:#0a0a0a;">A</div>
<div class="t" style="left:364.90px;top:555.00px;font:normal 11px/20px 'DejaVu Sans','Liberation Sans',sans-serif;color:#0a0a0a;">--</div>
<div class="t" style="left:438.00px;top:555.00px;font:normal 11px/20px 'DejaVu Sans','Liberation Sans',sans-serif;color:#0a0a0a;">--</div>
<div class="t" style="left:511.50px;top:555.00px;font:normal 11px/20px 'DejaVu Sans','Liberation Sans',sans-serif;color:#0a0a0a;">--</div>
<div class="t" style="left:584.70px;top:555.00px;font:normal 11px/20px 'DejaVu Sans','Liberation Sans',sans-serif;color:#0a0a0a;">--</div>
<div style="left:8.50px;top:574.74px;width:622.30px;height:20.46px;background:#ffffff;"></div>
<div class="t" style="left:12.10px;top:576.00px;font:normal 11px/20px 'DejaVu Sans','Liberation Sans',sans-serif;color:#0a0a0a;">25</div>
<div class="t" style="left:50.60px;top:576.00px;font:normal 11px/20px 'DejaVu Sans','Liberation Sans',sans-serif;color:#0a0a0a;">-29.52389ms</div>
<div class="t" style="left:137.90px;top:576.00px;font:normal 11px/20px 'DejaVu Sans','Liberation Sans',sans-serif;color:#0a0a0a;">01 00</div>
<div class="t" style="left:186.90px;top:576.00px;font:normal 11px/20px 'DejaVu Sans','Liberation Sans',sans-serif;color:#0a0a0a;">B5E</div>
<div class="t" style="left:250.50px;top:576.00px;font:normal 11px/20px 'DejaVu Sans','Liberation Sans',sans-serif;color:#0a0a0a;">4F5</div>
<div class="t" style="left:314.60px;top:576.00px;font:normal 11px/20px 'DejaVu Sans','Liberation Sans',sans-serif;color:#0a0a0a;">B</div>
<div class="t" style="left:364.90px;top:576.00px;font:normal 11px/20px 'DejaVu Sans','Liberation Sans',sans-serif;color:#0a0a0a;">--</div>
<div class="t" style="left:438.00px;top:576.00px;font:normal 11px/20px 'DejaVu Sans','Liberation Sans',sans-serif;color:#0a0a0a;">--</div>
<div class="t" style="left:511.50px;top:576.00px;font:normal 11px/20px 'DejaVu Sans','Liberation Sans',sans-serif;color:#0a0a0a;">--</div>
<div class="t" style="left:584.70px;top:576.00px;font:normal 11px/20px 'DejaVu Sans','Liberation Sans',sans-serif;color:#0a0a0a;">--</div>
<div style="left:8.50px;top:595.20px;width:622.30px;height:20.46px;background:#d9d9d9;"></div>
<div class="t" style="left:12.10px;top:596.00px;font:normal 11px/20px 'DejaVu Sans','Liberation Sans',sans-serif;color:#0a0a0a;">26</div>
<div class="t" style="left:50.60px;top:596.00px;font:normal 11px/20px 'DejaVu Sans','Liberation Sans',sans-serif;color:#0a0a0a;">-28.67189ms</div>
<div class="t" style="left:137.90px;top:596.00px;font:normal 11px/20px 'DejaVu Sans','Liberation Sans',sans-serif;color:#0a0a0a;">01 00</div>
<div class="t" style="left:186.90px;top:596.00px;font:normal 11px/20px 'DejaVu Sans','Liberation Sans',sans-serif;color:#0a0a0a;">2B2</div>
<div class="t" style="left:250.50px;top:596.00px;font:normal 11px/20px 'DejaVu Sans','Liberation Sans',sans-serif;color:#0a0a0a;">4C9</div>
<div class="t" style="left:314.60px;top:596.00px;font:normal 11px/20px 'DejaVu Sans','Liberation Sans',sans-serif;color:#0a0a0a;">5</div>
<div class="t" style="left:364.90px;top:596.00px;font:normal 11px/20px 'DejaVu Sans','Liberation Sans',sans-serif;color:#0a0a0a;">--</div>
<div class="t" style="left:438.00px;top:596.00px;font:normal 11px/20px 'DejaVu Sans','Liberation Sans',sans-serif;color:#0a0a0a;">--</div>
<div class="t" style="left:511.50px;top:596.00px;font:normal 11px/20px 'DejaVu Sans','Liberation Sans',sans-serif;color:#0a0a0a;">--</div>
<div class="t" style="left:584.70px;top:596.00px;font:normal 11px/20px 'DejaVu Sans','Liberation Sans',sans-serif;color:#0a0a0a;">--</div>
<div style="left:8.50px;top:615.66px;width:622.30px;height:20.46px;background:#ffffff;"></div>
<div class="t" style="left:12.10px;top:617.00px;font:normal 11px/20px 'DejaVu Sans','Liberation Sans',sans-serif;color:#0a0a0a;">27</div>
<div class="t" style="left:50.60px;top:617.00px;font:normal 11px/20px 'DejaVu Sans','Liberation Sans',sans-serif;color:#0a0a0a;">-27.81989ms</div>
<div class="t" style="left:137.90px;top:617.00px;font:normal 11px/20px 'DejaVu Sans','Liberation Sans',sans-serif;color:#0a0a0a;">10 00</div>
<div class="t" style="left:186.90px;top:617.00px;font:normal 11px/20px 'DejaVu Sans','Liberation Sans',sans-serif;color:#0a0a0a;">978</div>
<div class="t" style="left:250.50px;top:617.00px;font:normal 11px/20px 'DejaVu Sans','Liberation Sans',sans-serif;color:#0a0a0a;">1A2</div>
<div class="t" style="left:314.60px;top:617.00px;font:normal 11px/20px 'DejaVu Sans','Liberation Sans',sans-serif;color:#0a0a0a;">3</div>
<div class="t" style="left:364.90px;top:617.00px;font:normal 11px/20px 'DejaVu Sans','Liberation Sans',sans-serif;color:#0a0a0a;">--</div>
<div class="t" style="left:438.00px;top:617.00px;font:normal 11px/20px 'DejaVu Sans','Liberation Sans',sans-serif;color:#0a0a0a;">--</div>
<div class="t" style="left:511.50px;top:617.00px;font:normal 11px/20px 'DejaVu Sans','Liberation Sans',sans-serif;color:#0a0a0a;">--</div>
<div class="t" style="left:584.70px;top:617.00px;font:normal 11px/20px 'DejaVu Sans','Liberation Sans',sans-serif;color:#0a0a0a;">--</div>
<div style="left:8.50px;top:636.12px;width:622.30px;height:20.46px;background:#d9d9d9;"></div>
<div class="t" style="left:12.10px;top:637.00px;font:normal 11px/20px 'DejaVu Sans','Liberation Sans',sans-serif;color:#0a0a0a;">28</div>
<div class="t" style="left:50.60px;top:637.00px;font:normal 11px/20px 'DejaVu Sans','Liberation Sans',sans-serif;color:#0a0a0a;">-26.96789ms</div>
<div class="t" style="left:137.90px;top:637.00px;font:normal 11px/20px 'DejaVu Sans','Liberation Sans',sans-serif;color:#0a0a0a;">11 00</div>
<div class="t" style="left:186.90px;top:637.00px;font:normal 11px/20px 'DejaVu Sans','Liberation Sans',sans-serif;color:#0a0a0a;">0EC</div>
<div class="t" style="left:250.50px;top:637.00px;font:normal 11px/20px 'DejaVu Sans','Liberation Sans',sans-serif;color:#0a0a0a;">7FE</div>
<div class="t" style="left:314.60px;top:637.00px;font:normal 11px/20px 'DejaVu Sans','Liberation Sans',sans-serif;color:#0a0a0a;">2</div>
<div class="t" style="left:364.90px;top:637.00px;font:normal 11px/20px 'DejaVu Sans','Liberation Sans',sans-serif;color:#0a0a0a;">--</div>
<div class="t" style="left:438.00px;top:637.00px;font:normal 11px/20px 'DejaVu Sans','Liberation Sans',sans-serif;color:#0a0a0a;">--</div>
<div class="t" style="left:511.50px;top:637.00px;font:normal 11px/20px 'DejaVu Sans','Liberation Sans',sans-serif;color:#0a0a0a;">--</div>
<div class="t" style="left:584.70px;top:637.00px;font:normal 11px/20px 'DejaVu Sans','Liberation Sans',sans-serif;color:#0a0a0a;">--</div>
<div style="left:8.50px;top:656.58px;width:622.30px;height:20.46px;background:#ffffff;"></div>
<div class="t" style="left:12.10px;top:657.00px;font:normal 11px/20px 'DejaVu Sans','Liberation Sans',sans-serif;color:#0a0a0a;">29</div>
<div class="t" style="left:50.60px;top:657.00px;font:normal 11px/20px 'DejaVu Sans','Liberation Sans',sans-serif;color:#0a0a0a;">-26.11589ms</div>
<div class="t" style="left:137.90px;top:657.00px;font:normal 11px/20px 'DejaVu Sans','Liberation Sans',sans-serif;color:#0a0a0a;">10 00</div>
<div class="t" style="left:186.90px;top:657.00px;font:normal 11px/20px 'DejaVu Sans','Liberation Sans',sans-serif;color:#0a0a0a;">694</div>
<div class="t" style="left:250.50px;top:657.00px;font:normal 11px/20px 'DejaVu Sans','Liberation Sans',sans-serif;color:#0a0a0a;">4B2</div>
<div class="t" style="left:314.60px;top:657.00px;font:normal 11px/20px 'DejaVu Sans','Liberation Sans',sans-serif;color:#0a0a0a;">3</div>
<div class="t" style="left:364.90px;top:657.00px;font:normal 11px/20px 'DejaVu Sans','Liberation Sans',sans-serif;color:#0a0a0a;">--</div>
<div class="t" style="left:438.00px;top:657.00px;font:normal 11px/20px 'DejaVu Sans','Liberation Sans',sans-serif;color:#0a0a0a;">--</div>
<div class="t" style="left:511.50px;top:657.00px;font:normal 11px/20px 'DejaVu Sans','Liberation Sans',sans-serif;color:#0a0a0a;">--</div>
<div class="t" style="left:584.70px;top:657.00px;font:normal 11px/20px 'DejaVu Sans','Liberation Sans',sans-serif;color:#0a0a0a;">--</div>
<div style="left:8.50px;top:677.04px;width:622.30px;height:20.46px;background:#d9d9d9;"></div>
<div class="t" style="left:12.10px;top:678.00px;font:normal 11px/20px 'DejaVu Sans','Liberation Sans',sans-serif;color:#0a0a0a;">30</div>
<div class="t" style="left:50.60px;top:678.00px;font:normal 11px/20px 'DejaVu Sans','Liberation Sans',sans-serif;color:#0a0a0a;">-25.26389ms</div>
<div class="t" style="left:137.90px;top:678.00px;font:normal 11px/20px 'DejaVu Sans','Liberation Sans',sans-serif;color:#0a0a0a;">01 00</div>
<div class="t" style="left:186.90px;top:678.00px;font:normal 11px/20px 'DejaVu Sans','Liberation Sans',sans-serif;color:#0a0a0a;">B66</div>
<div class="t" style="left:250.50px;top:678.00px;font:normal 11px/20px 'DejaVu Sans','Liberation Sans',sans-serif;color:#0a0a0a;">3BF</div>
<div class="t" style="left:314.60px;top:678.00px;font:normal 11px/20px 'DejaVu Sans','Liberation Sans',sans-serif;color:#0a0a0a;">3</div>
<div class="t" style="left:364.90px;top:678.00px;font:normal 11px/20px 'DejaVu Sans','Liberation Sans',sans-serif;color:#0a0a0a;">07</div>
<div class="t" style="left:438.00px;top:678.00px;font:normal 11px/20px 'DejaVu Sans','Liberation Sans',sans-serif;color:#0a0a0a;">075</div>
<div class="t" style="left:511.50px;top:678.00px;font:normal 11px/20px 'DejaVu Sans','Liberation Sans',sans-serif;color:#0a0a0a;">01</div>
<div class="t" style="left:584.70px;top:678.00px;font:normal 11px/20px 'DejaVu Sans','Liberation Sans',sans-serif;color:#0a0a0a;">--</div>
<div style="left:8.50px;top:697.50px;width:622.30px;height:20.46px;background:#ffffff;"></div>
<div class="t" style="left:12.10px;top:698.00px;font:normal 11px/20px 'DejaVu Sans','Liberation Sans',sans-serif;color:#0a0a0a;">31</div>
<div class="t" style="left:50.60px;top:698.00px;font:normal 11px/20px 'DejaVu Sans','Liberation Sans',sans-serif;color:#0a0a0a;">-24.41189ms</div>
<div class="t" style="left:137.90px;top:698.00px;font:normal 11px/20px 'DejaVu Sans','Liberation Sans',sans-serif;color:#0a0a0a;">10 00</div>
<div class="t" style="left:186.90px;top:698.00px;font:normal 11px/20px 'DejaVu Sans','Liberation Sans',sans-serif;color:#0a0a0a;">95D</div>
<div class="t" style="left:250.50px;top:698.00px;font:normal 11px/20px 'DejaVu Sans','Liberation Sans',sans-serif;color:#0a0a0a;">A54</div>
<div class="t" style="left:314.60px;top:698.00px;font:normal 11px/20px 'DejaVu Sans','Liberation Sans',sans-serif;color:#0a0a0a;">C</div>
<div class="t" style="left:364.90px;top:698.00px;font:normal 11px/20px 'DejaVu Sans','Liberation Sans',sans-serif;color:#0a0a0a;">Start</div>
<div class="t" style="left:438.00px;top:698.00px;font:normal 11px/20px 'DejaVu Sans','Liberation Sans',sans-serif;color:#0a0a0a;">--</div>
<div class="t" style="left:511.50px;top:698.00px;font:normal 11px/20px 'DejaVu Sans','Liberation Sans',sans-serif;color:#0a0a0a;">--</div>
<div class="t" style="left:584.70px;top:698.00px;font:normal 11px/20px 'DejaVu Sans','Liberation Sans',sans-serif;color:#0a0a0a;">--</div>
<div style="left:46.70px;top:83.70px;width:1.00px;height:634.26px;background:#e3e3e3;"></div>
<div style="left:134.00px;top:83.70px;width:1.00px;height:634.26px;background:#e3e3e3;"></div>
<div style="left:183.00px;top:83.70px;width:1.00px;height:634.26px;background:#e3e3e3;"></div>
<div style="left:246.60px;top:83.70px;width:1.00px;height:634.26px;background:#e3e3e3;"></div>
<div style="left:310.70px;top:83.70px;width:1.00px;height:634.26px;background:#e3e3e3;"></div>
<div style="left:361.00px;top:83.70px;width:1.00px;height:634.26px;background:#e3e3e3;"></div>
<div style="left:434.10px;top:83.70px;width:1.00px;height:634.26px;background:#e3e3e3;"></div>
<div style="left:507.60px;top:83.70px;width:1.00px;height:634.26px;background:#e3e3e3;"></div>
<div style="left:580.80px;top:83.70px;width:1.00px;height:634.26px;background:#e3e3e3;"></div>
<div style="left:8.50px;top:329.30px;width:622.30px;height:1.40px;background:#27a9e1;"></div>
<div style="left:8.50px;top:348.70px;width:622.30px;height:1.40px;background:#27a9e1;"></div>
<div style="left:8.50px;top:329.30px;width:1.40px;height:20.80px;background:#27a9e1;"></div>
<div style="left:630.80px;top:83.70px;width:8.00px;height:644.90px;background:#e6e6e6;"></div>
<div style="left:633.90px;top:84.20px;width:2.70px;height:151.80px;background:#8e8e8e;"></div>
<div style="left:7.10px;top:717.96px;width:631.70px;height:10.24px;background:#ececec;"></div>
<div style="left:8.50px;top:717.96px;width:622.30px;height:2.80px;background:#dcdcdc;"></div>
<div style="left:6.60px;top:723.90px;width:399.40px;height:2.70px;background:#8e8e8e;"></div>
<div style="left:6.10px;top:728.20px;width:632.70px;height:0.70px;background:#a8a8a8;"></div>
<div style="left:638.10px;top:83.70px;width:0.70px;height:645.20px;background:#a8a8a8;"></div>
<div style="left:641.20px;top:23.00px;width:638.10px;height:708.00px;background:linear-gradient(90deg,#b0acac 0,#857f7f 1.6px,#857f7f 100%);"></div>
<div style="left:644.00px;top:25.20px;width:632.80px;height:18.20px;background:#333333;"></div>
<div class="t" style="left:653.60px;top:25.00px;font:normal 11px/20px 'DejaVu Sans','Liberation Sans',sans-serif;color:#f0f0f0;">Waveform View</div>
<div style="left:644.00px;top:43.40px;width:632.80px;height:137.60px;background:#333333;"></div>
<div style="left:644.00px;top:43.20px;width:632.80px;height:0.80px;background:#4c4c4c;"></div>
<svg style="left:0;top:0" width="1410" height="200" viewBox="0 0 1410 200"><defs><linearGradient id="og" x1="0" x2="1" y1="0" y2="0"><stop offset="0" stop-color="#d2ca34"/><stop offset="0.45" stop-color="#b9b130"/><stop offset="1" stop-color="#8f8a2e"/></linearGradient><pattern id="op" x="644" y="0" width="5.27" height="10" patternUnits="userSpaceOnUse"><rect x="0" y="0" width="5.27" height="10" fill="url(#og)"/></pattern></defs><clipPath id="oc"><rect x="644.0" y="43.4" width="632.8" height="137.6"/></clipPath><g clip-path="url(#oc)"><rect x="644.0" y="63" width="632.8" height="94" fill="#cbc333"/><rect x="650.57" y="66" width="2.00" height="88" fill="#a8a12f"/><rect x="653.87" y="66" width="1.1" height="88" fill="#b5ad30"/><rect x="655.97" y="66" width="1.60" height="88" fill="#a8a12f"/><rect x="658.87" y="66" width="1.1" height="88" fill="#b5ad30"/><rect x="660.97" y="66" width="2.00" height="88" fill="#a8a12f"/><rect x="664.14" y="66" width="1.1" height="88" fill="#b5ad30"/><rect x="666.24" y="66" width="2.4" height="88" fill="#938d2d"/><rect x="669.74" y="66" width="1.1" height="88" fill="#b5ad30"/><rect x="674.74" y="66" width="1.1" height="88" fill="#b5ad30"/><rect x="676.84" y="66" width="2.00" height="88" fill="#a8a12f"/><rect x="680.01" y="66" width="1.1" height="88" fill="#b5ad30"/><rect x="682.11" y="66" width="2.00" height="88" fill="#a8a12f"/><rect x="687.71" y="66" width="1.20" height="88" fill="#a8a12f"/><rect x="692.71" y="66" width="2.4" height="88" fill="#938d2d"/><rect x="703.38" y="66" width="2.4" height="88" fill="#938d2d"/><rect x="706.48" y="66" width="1.1" height="88" fill="#b5ad30"/><rect x="708.58" y="66" width="1.60" height="88" fill="#a8a12f"/><rect x="713.98" y="66" width="1.60" height="88" fill="#a8a12f"/><rect x="716.88" y="66" width="1.1" height="88" fill="#b5ad30"/><rect x="718.98" y="66" width="2.00" height="88" fill="#a8a12f"/><rect x="722.15" y="66" width="1.1" height="88" fill="#b5ad30"/><rect x="724.25" y="66" width="1.60" height="88" fill="#a8a12f"/><rect x="729.52" y="66" width="1.20" height="88" fill="#a8a12f"/><rect x="734.79" y="66" width="2.00" height="88" fill="#a8a12f"/><rect x="743.89" y="66" width="1.1" height="88" fill="#b5ad30"/><rect x="745.99" y="66" width="1.60" height="88" fill="#a8a12f"/><rect x="751.59" y="66" width="1.60" height="88" fill="#a8a12f"/><rect x="754.76" y="66" width="1.1" height="88" fill="#b5ad30"/><rect x="762.13" y="66" width="1.20" height="88" fill="#a8a12f"/><rect x="775.84" y="66" width="1.1" height="88" fill="#b5ad30"/><rect x="777.94" y="66" width="2.4" height="88" fill="#938d2d"/><rect x="781.04" y="66" width="1.1" height="88" fill="#b5ad30"/><rect x="783.14" y="66" width="1.20" height="88" fill="#a8a12f"/><rect x="786.24" y="66" width="1.1" height="88" fill="#b5ad30"/><rect x="788.34" y="66" width="2.4" height="88" fill="#938d2d"/><rect x="804.41" y="66" width="1.60" height="88" fill="#a8a12f"/><rect x="809.81" y="66" width="1.20" height="88" fill="#a8a12f"/><rect x="815.08" y="66" width="1.20" height="88" fill="#a8a12f"/><rect x="817.98" y="66" width="1.1" height="88" fill="#b5ad30"/><rect x="820.08" y="66" width="1.60" height="88" fill="#a8a12f"/><rect x="825.48" y="66" width="2.4" height="88" fill="#938d2d"/><rect x="828.58" y="66" width="1.1" height="88" fill="#b5ad30"/><rect x="830.68" y="66" width="2.4" height="88" fill="#938d2d"/><rect x="841.22" y="66" width="2.00" height="88" fill="#a8a12f"/><rect x="844.12" y="66" width="1.1" height="88" fill="#b5ad30"/><rect x="846.22" y="66" width="1.20" height="88" fill="#a8a12f"/><rect x="849.72" y="66" width="1.1" height="88" fill="#b5ad30"/><rect x="851.82" y="66" width="2.00" height="88" fill="#a8a12f"/><rect x="862.36" y="66" width="1.20" height="88" fill="#a8a12f"/><rect x="870.93" y="66" width="1.1" height="88" fill="#b5ad30"/><rect x="878.23" y="66" width="1.60" height="88" fill="#a8a12f"/><rect x="899.10" y="66" width="1.60" height="88" fill="#a8a12f"/><rect x="902.20" y="66" width="1.1" height="88" fill="#b5ad30"/><rect x="909.70" y="66" width="2.00" height="88" fill="#a8a12f"/><rect x="913.20" y="66" width="1.1" height="88" fill="#b5ad30"/><rect x="920.90" y="66" width="2.00" height="88" fill="#a8a12f"/><rect x="929.40" y="66" width="1.1" height="88" fill="#b5ad30"/><rect x="931.50" y="66" width="2.4" height="88" fill="#938d2d"/><rect x="942.10" y="66" width="2.00" height="88" fill="#a8a12f"/><rect x="945.27" y="66" width="1.1" height="88" fill="#b5ad30"/><rect x="947.37" y="66" width="2.4" height="88" fill="#938d2d"/><rect x="956.14" y="66" width="1.1" height="88" fill="#b5ad30"/><rect x="958.24" y="66" width="1.60" height="88" fill="#a8a12f"/><rect x="963.24" y="66" width="1.60" height="88" fill="#a8a12f"/><rect x="968.51" y="66" width="1.60" height="88" fill="#a8a12f"/><rect x="974.11" y="66" width="2.00" height="88" fill="#a8a12f"/><rect x="977.41" y="66" width="1.1" height="88" fill="#b5ad30"/><rect x="979.51" y="66" width="1.60" height="88" fill="#a8a12f"/><rect x="984.91" y="66" width="1.60" height="88" fill="#a8a12f"/><rect x="990.11" y="66" width="2.00" height="88" fill="#a8a12f"/><rect x="998.01" y="66" width="1.1" height="88" fill="#b5ad30"/><rect x="1005.11" y="66" width="2.00" height="88" fill="#a8a12f"/><rect x="1010.11" y="66" width="2.4" height="88" fill="#938d2d"/><rect x="1015.31" y="66" width="1.20" height="88" fill="#a8a12f"/><rect x="1025.85" y="66" width="1.20" height="88" fill="#a8a12f"/><rect x="1031.12" y="66" width="1.20" height="88" fill="#a8a12f"/><rect x="1034.62" y="66" width="1.1" height="88" fill="#b5ad30"/><rect x="1039.62" y="66" width="1.1" height="88" fill="#b5ad30"/><rect x="1041.72" y="66" width="1.60" height="88" fill="#a8a12f"/><rect x="1050.42" y="66" width="1.1" height="88" fill="#b5ad30"/><rect x="1062.99" y="66" width="2.00" height="88" fill="#a8a12f"/><rect x="1068.26" y="66" width="1.20" height="88" fill="#a8a12f"/><rect x="1073.53" y="66" width="1.20" height="88" fill="#a8a12f"/><rect x="1076.70" y="66" width="1.1" height="88" fill="#b5ad30"/><rect x="1081.90" y="66" width="1.1" height="88" fill="#b5ad30"/><rect x="1086.90" y="66" width="1.1" height="88" fill="#b5ad30"/><rect x="1094.27" y="66" width="2.00" height="88" fill="#a8a12f"/><rect x="1099.54" y="66" width="2.00" height="88" fill="#a8a12f"/><rect x="1102.44" y="66" width="1.1" height="88" fill="#b5ad30"/><rect x="1109.81" y="66" width="2.4" height="88" fill="#938d2d"/><rect x="1112.71" y="66" width="1.1" height="88" fill="#b5ad30"/><rect x="1114.81" y="66" width="1.60" height="88" fill="#a8a12f"/><rect x="1119.81" y="66" width="2.4" height="88" fill="#938d2d"/><rect x="1122.98" y="66" width="1.1" height="88" fill="#b5ad30"/><rect x="1127.98" y="66" width="1.1" height="88" fill="#b5ad30"/><rect x="1130.08" y="66" width="2.4" height="88" fill="#938d2d"/><rect x="1135.35" y="66" width="1.20" height="88" fill="#a8a12f"/><rect x="1138.52" y="66" width="1.1" height="88" fill="#b5ad30"/><rect x="1140.62" y="66" width="1.20" height="88" fill="#a8a12f"/><rect x="1145.89" y="66" width="1.20" height="88" fill="#a8a12f"/><rect x="1151.09" y="66" width="1.60" height="88" fill="#a8a12f"/><rect x="1156.69" y="66" width="1.20" height="88" fill="#a8a12f"/><rect x="1165.59" y="66" width="1.1" height="88" fill="#b5ad30"/><rect x="1170.59" y="66" width="1.1" height="88" fill="#b5ad30"/><rect x="1172.69" y="66" width="1.20" height="88" fill="#a8a12f"/><rect x="1175.86" y="66" width="1.1" height="88" fill="#b5ad30"/><rect x="1177.96" y="66" width="2.4" height="88" fill="#938d2d"/><rect x="1181.26" y="66" width="1.1" height="88" fill="#b5ad30"/><rect x="1183.36" y="66" width="1.20" height="88" fill="#a8a12f"/><rect x="1186.53" y="66" width="1.1" height="88" fill="#b5ad30"/><rect x="1188.63" y="66" width="1.60" height="88" fill="#a8a12f"/><rect x="1193.90" y="66" width="1.60" height="88" fill="#a8a12f"/><rect x="1197.00" y="66" width="1.1" height="88" fill="#b5ad30"/><rect x="1199.10" y="66" width="1.60" height="88" fill="#a8a12f"/><rect x="1202.27" y="66" width="1.1" height="88" fill="#b5ad30"/><rect x="1204.37" y="66" width="1.20" height="88" fill="#a8a12f"/><rect x="1207.47" y="66" width="1.1" height="88" fill="#b5ad30"/><rect x="1209.57" y="66" width="1.20" height="88" fill="#a8a12f"/><rect x="1214.77" y="66" width="2.00" height="88" fill="#a8a12f"/><rect x="1220.37" y="66" width="2.4" height="88" fill="#938d2d"/><rect x="1241.71" y="66" width="2.00" height="88" fill="#a8a12f"/><rect x="1257.71" y="66" width="1.60" height="88" fill="#a8a12f"/><rect x="1262.71" y="66" width="2.4" height="88" fill="#938d2d"/><rect x="1267.98" y="66" width="1.60" height="88" fill="#a8a12f"/><rect x="1271.48" y="66" width="1.1" height="88" fill="#b5ad30"/><path d="M644.80 66.5V154M647.40 66.5V154M650.07 66.5V154M655.47 66.5V154M658.07 66.5V154M660.47 66.5V154M665.74 66.5V154M671.34 66.5V154M676.34 66.5V154M681.61 66.5V154M687.21 66.5V154M692.21 66.5V154M697.48 66.5V154M702.88 66.5V154M708.08 66.5V154M713.48 66.5V154M718.48 66.5V154M723.75 66.5V154M729.02 66.5V154M734.29 66.5V154M739.89 66.5V154M745.49 66.5V154M751.09 66.5V154M756.36 66.5V154M761.63 66.5V154M766.90 66.5V154M772.17 66.5V154M777.44 66.5V154M782.64 66.5V154M787.84 66.5V154M793.24 66.5V154M798.64 66.5V154M803.91 66.5V154M809.31 66.5V154M814.58 66.5V154M819.58 66.5V154M822.18 66.5V154M824.98 66.5V154M830.18 66.5V154M832.78 66.5V154M835.45 66.5V154M840.72 66.5V154M845.72 66.5V154M851.32 66.5V154M856.59 66.5V154M861.86 66.5V154M867.13 66.5V154M872.53 66.5V154M877.73 66.5V154M880.33 66.5V154M882.93 66.5V154M887.93 66.5V154M893.33 66.5V154M898.60 66.5V154M903.80 66.5V154M909.20 66.5V154M914.80 66.5V154M920.40 66.5V154M926.00 66.5V154M931.00 66.5V154M936.20 66.5V154M941.60 66.5V154M944.20 66.5V154M946.87 66.5V154M952.47 66.5V154M957.74 66.5V154M962.74 66.5V154M965.34 66.5V154M968.01 66.5V154M973.61 66.5V154M979.01 66.5V154M984.41 66.5V154M989.61 66.5V154M994.61 66.5V154M999.61 66.5V154M1004.61 66.5V154M1009.61 66.5V154M1014.81 66.5V154M1020.08 66.5V154M1025.35 66.5V154M1030.62 66.5V154M1036.22 66.5V154M1041.22 66.5V154M1046.82 66.5V154M1052.02 66.5V154M1057.22 66.5V154M1062.49 66.5V154M1067.76 66.5V154M1073.03 66.5V154M1078.30 66.5V154M1083.50 66.5V154M1088.50 66.5V154M1093.77 66.5V154M1099.04 66.5V154M1104.04 66.5V154M1109.31 66.5V154M1114.31 66.5V154M1119.31 66.5V154M1124.58 66.5V154M1129.58 66.5V154M1134.85 66.5V154M1140.12 66.5V154M1145.39 66.5V154M1147.99 66.5V154M1150.59 66.5V154M1156.19 66.5V154M1161.59 66.5V154M1167.19 66.5V154M1172.19 66.5V154M1177.46 66.5V154M1182.86 66.5V154M1188.13 66.5V154M1193.40 66.5V154M1198.60 66.5V154M1203.87 66.5V154M1209.07 66.5V154M1214.27 66.5V154M1219.87 66.5V154M1225.07 66.5V154M1230.34 66.5V154M1232.94 66.5V154M1235.61 66.5V154M1241.21 66.5V154M1246.61 66.5V154M1251.61 66.5V154M1254.21 66.5V154M1257.21 66.5V154M1262.21 66.5V154M1267.48 66.5V154M1273.08 66.5V154M1275.68 66.5V154" stroke="#403e22" stroke-width="1.0" fill="none"/><rect x="644.0" y="117.2" width="632.8" height="36.4" fill="#bdb531" opacity="0.42"/><rect x="644.0" y="62.8" width="632.8" height="3.4" fill="#f3eb35"/><rect x="644.0" y="153.6" width="632.8" height="3.7" fill="#efe733"/><path d="M644.0 83.2H1276.8" stroke="#f2ea3a" stroke-width="1.1" stroke-dasharray="1.6 4.3" opacity="0.55"/><path d="M644.0 91.6H1276.8" stroke="#f2ea3a" stroke-width="1.1" stroke-dasharray="1.6 4.3" opacity="0.5"/><path d="M644.0 128.6H1276.8" stroke="#f2ea3a" stroke-width="1.1" stroke-dasharray="1.6 4.3" opacity="0.8"/><path d="M644.0 136.5H1276.8" stroke="#f2ea3a" stroke-width="1.1" stroke-dasharray="1.6 4.3" opacity="0.35"/><path d="M707.7 46V170" stroke="#cfcfcf" stroke-width="0.9" stroke-dasharray="1 2.1" opacity="0.75"/><path d="M770.8 46V170" stroke="#cfcfcf" stroke-width="0.9" stroke-dasharray="1 2.1" opacity="0.75"/><path d="M833.8 46V170" stroke="#cfcfcf" stroke-width="0.9" stroke-dasharray="1 2.1" opacity="0.75"/><path d="M896.9 46V170" stroke="#cfcfcf" stroke-width="0.9" stroke-dasharray="1 2.1" opacity="0.75"/><path d="M959.9 46V170" stroke="#cfcfcf" stroke-width="0.9" stroke-dasharray="1 2.1" opacity="0.75"/><path d="M1022.9 46V170" stroke="#cfcfcf" stroke-width="0.9" stroke-dasharray="1 2.1" opacity="0.75"/><path d="M1086.0 46V170" stroke="#cfcfcf" stroke-width="0.9" stroke-dasharray="1 2.1" opacity="0.75"/><path d="M1149.0 46V170" stroke="#cfcfcf" stroke-width="0.9" stroke-dasharray="1 2.1" opacity="0.75"/><path d="M1212.1 46V170" stroke="#cfcfcf" stroke-width="0.9" stroke-dasharray="1 2.1" opacity="0.75"/><rect x="644.0" y="107.8" width="632.8" height="9.3" fill="#3aeefc"/><rect x="644.50" y="107.8" width="2.00" height="9.3" fill="#6d28e6"/><rect x="647.20" y="107.8" width="1.1" height="9.3" fill="#f2ffff"/><rect x="649.40" y="107.8" width="1.30" height="9.3" fill="#6d28e6"/><rect x="653.67" y="107.8" width="0.8" height="9.3" fill="#3ae85e"/><rect x="654.67" y="107.8" width="1.60" height="9.3" fill="#8436f4"/><rect x="657.37" y="107.8" width="1.1" height="9.3" fill="#f2ffff"/><rect x="660.27" y="107.8" width="1.30" height="9.3" fill="#6d28e6"/><rect x="662.97" y="107.8" width="1.1" height="9.3" fill="#f2ffff"/><rect x="664.54" y="107.8" width="0.8" height="9.3" fill="#3ae85e"/><rect x="665.54" y="107.8" width="1.60" height="9.3" fill="#8436f4"/><rect x="668.24" y="107.8" width="1.1" height="9.3" fill="#f2ffff"/><rect x="670.81" y="107.8" width="1.30" height="9.3" fill="#8436f4"/><rect x="673.51" y="107.8" width="1.1" height="9.3" fill="#f2ffff"/><rect x="675.08" y="107.8" width="0.8" height="9.3" fill="#3ae85e"/><rect x="676.08" y="107.8" width="2.00" height="9.3" fill="#7a2cf2"/><rect x="678.78" y="107.8" width="1.1" height="9.3" fill="#f2ffff"/><rect x="679.98" y="107.8" width="0.8" height="9.3" fill="#3ae85e"/><rect x="680.98" y="107.8" width="1.60" height="9.3" fill="#8436f4"/><rect x="683.68" y="107.8" width="1.1" height="9.3" fill="#f2ffff"/><rect x="685.25" y="107.8" width="0.8" height="9.3" fill="#3ae85e"/><rect x="686.25" y="107.8" width="1.60" height="9.3" fill="#7a2cf2"/><rect x="690.52" y="107.8" width="0.8" height="9.3" fill="#3ae85e"/><rect x="691.52" y="107.8" width="1.30" height="9.3" fill="#6d28e6"/><rect x="696.12" y="107.8" width="0.8" height="9.3" fill="#3ae85e"/><rect x="697.12" y="107.8" width="1.60" height="9.3" fill="#7a2cf2"/><rect x="702.39" y="107.8" width="2.00" height="9.3" fill="#7a2cf2"/><rect x="705.09" y="107.8" width="1.1" height="9.3" fill="#f2ffff"/><rect x="706.29" y="107.8" width="0.8" height="9.3" fill="#3ae85e"/><rect x="707.29" y="107.8" width="1.30" height="9.3" fill="#6d28e6"/><rect x="711.56" y="107.8" width="0.8" height="9.3" fill="#3ae85e"/><rect x="712.56" y="107.8" width="2.00" height="9.3" fill="#8436f4"/><rect x="715.26" y="107.8" width="1.1" height="9.3" fill="#f2ffff"/><rect x="717.46" y="107.8" width="1.60" height="9.3" fill="#7a2cf2"/><rect x="720.16" y="107.8" width="1.1" height="9.3" fill="#f2ffff"/><rect x="723.06" y="107.8" width="1.60" height="9.3" fill="#8436f4"/><rect x="725.76" y="107.8" width="1.1" height="9.3" fill="#f2ffff"/><rect x="727.66" y="107.8" width="0.8" height="9.3" fill="#3ae85e"/><rect x="728.66" y="107.8" width="1.60" height="9.3" fill="#7a2cf2"/><rect x="733.26" y="107.8" width="0.8" height="9.3" fill="#3ae85e"/><rect x="734.26" y="107.8" width="1.60" height="9.3" fill="#7a2cf2"/><rect x="738.53" y="107.8" width="0.8" height="9.3" fill="#3ae85e"/><rect x="739.53" y="107.8" width="2.00" height="9.3" fill="#8436f4"/><rect x="742.23" y="107.8" width="1.1" height="9.3" fill="#f2ffff"/><rect x="743.43" y="107.8" width="0.8" height="9.3" fill="#3ae85e"/><rect x="744.43" y="107.8" width="2.00" height="9.3" fill="#7a2cf2"/><rect x="747.13" y="107.8" width="1.1" height="9.3" fill="#f2ffff"/><rect x="749.03" y="107.8" width="0.8" height="9.3" fill="#3ae85e"/><rect x="750.03" y="107.8" width="1.30" height="9.3" fill="#8436f4"/><rect x="752.73" y="107.8" width="1.1" height="9.3" fill="#f2ffff"/><rect x="755.30" y="107.8" width="2.00" height="9.3" fill="#7a2cf2"/><rect x="758.00" y="107.8" width="1.1" height="9.3" fill="#f2ffff"/><rect x="759.57" y="107.8" width="0.8" height="9.3" fill="#3ae85e"/><rect x="760.57" y="107.8" width="1.30" height="9.3" fill="#8436f4"/><rect x="764.84" y="107.8" width="0.8" height="9.3" fill="#3ae85e"/><rect x="765.84" y="107.8" width="2.00" height="9.3" fill="#8436f4"/><rect x="770.74" y="107.8" width="2.00" height="9.3" fill="#7a2cf2"/><rect x="773.44" y="107.8" width="1.1" height="9.3" fill="#f2ffff"/><rect x="776.01" y="107.8" width="2.00" height="9.3" fill="#7a2cf2"/><rect x="778.71" y="107.8" width="1.1" height="9.3" fill="#f2ffff"/><rect x="780.61" y="107.8" width="0.8" height="9.3" fill="#3ae85e"/><rect x="781.61" y="107.8" width="2.00" height="9.3" fill="#7a2cf2"/><rect x="784.31" y="107.8" width="1.1" height="9.3" fill="#f2ffff"/><rect x="785.51" y="107.8" width="0.8" height="9.3" fill="#3ae85e"/><rect x="786.51" y="107.8" width="1.60" height="9.3" fill="#8436f4"/><rect x="789.21" y="107.8" width="1.1" height="9.3" fill="#f2ffff"/><rect x="791.78" y="107.8" width="1.60" height="9.3" fill="#6d28e6"/><rect x="794.48" y="107.8" width="1.1" height="9.3" fill="#f2ffff"/><rect x="796.05" y="107.8" width="0.8" height="9.3" fill="#3ae85e"/><rect x="797.05" y="107.8" width="1.30" height="9.3" fill="#7a2cf2"/><rect x="799.75" y="107.8" width="1.1" height="9.3" fill="#f2ffff"/><rect x="801.65" y="107.8" width="0.8" height="9.3" fill="#3ae85e"/><rect x="802.65" y="107.8" width="2.00" height="9.3" fill="#7a2cf2"/><rect x="805.35" y="107.8" width="1.1" height="9.3" fill="#f2ffff"/><rect x="807.25" y="107.8" width="0.8" height="9.3" fill="#3ae85e"/><rect x="808.25" y="107.8" width="1.60" height="9.3" fill="#7a2cf2"/><rect x="810.95" y="107.8" width="1.1" height="9.3" fill="#f2ffff"/><rect x="812.85" y="107.8" width="0.8" height="9.3" fill="#3ae85e"/><rect x="813.85" y="107.8" width="1.60" height="9.3" fill="#6d28e6"/><rect x="816.55" y="107.8" width="1.1" height="9.3" fill="#f2ffff"/><rect x="818.12" y="107.8" width="0.8" height="9.3" fill="#3ae85e"/><rect x="819.12" y="107.8" width="2.00" height="9.3" fill="#7a2cf2"/><rect x="824.39" y="107.8" width="1.60" height="9.3" fill="#8436f4"/><rect x="827.09" y="107.8" width="1.1" height="9.3" fill="#f2ffff"/><rect x="828.99" y="107.8" width="0.8" height="9.3" fill="#3ae85e"/><rect x="829.99" y="107.8" width="1.60" height="9.3" fill="#7a2cf2"/><rect x="832.69" y="107.8" width="1.1" height="9.3" fill="#f2ffff"/><rect x="835.26" y="107.8" width="1.30" height="9.3" fill="#6d28e6"/><rect x="837.96" y="107.8" width="1.1" height="9.3" fill="#f2ffff"/><rect x="840.53" y="107.8" width="1.30" height="9.3" fill="#8436f4"/><rect x="844.80" y="107.8" width="0.8" height="9.3" fill="#3ae85e"/><rect x="845.80" y="107.8" width="1.60" height="9.3" fill="#8436f4"/><rect x="851.40" y="107.8" width="1.30" height="9.3" fill="#7a2cf2"/><rect x="854.10" y="107.8" width="1.1" height="9.3" fill="#f2ffff"/><rect x="856.30" y="107.8" width="2.00" height="9.3" fill="#8436f4"/><rect x="859.00" y="107.8" width="1.1" height="9.3" fill="#f2ffff"/><rect x="860.90" y="107.8" width="0.8" height="9.3" fill="#3ae85e"/><rect x="861.90" y="107.8" width="1.60" height="9.3" fill="#7a2cf2"/><rect x="866.50" y="107.8" width="0.8" height="9.3" fill="#3ae85e"/><rect x="867.50" y="107.8" width="2.00" height="9.3" fill="#6d28e6"/><rect x="870.20" y="107.8" width="1.1" height="9.3" fill="#f2ffff"/><rect x="872.77" y="107.8" width="1.30" height="9.3" fill="#6d28e6"/><rect x="877.37" y="107.8" width="0.8" height="9.3" fill="#3ae85e"/><rect x="878.37" y="107.8" width="1.30" height="9.3" fill="#6d28e6"/><rect x="883.64" y="107.8" width="1.30" height="9.3" fill="#6d28e6"/><rect x="886.34" y="107.8" width="1.1" height="9.3" fill="#f2ffff"/><rect x="888.91" y="107.8" width="1.30" height="9.3" fill="#7a2cf2"/><rect x="891.61" y="107.8" width="1.1" height="9.3" fill="#f2ffff"/><rect x="893.81" y="107.8" width="1.60" height="9.3" fill="#8436f4"/><rect x="896.51" y="107.8" width="1.1" height="9.3" fill="#f2ffff"/><rect x="899.08" y="107.8" width="2.00" height="9.3" fill="#8436f4"/><rect x="902.98" y="107.8" width="0.8" height="9.3" fill="#3ae85e"/><rect x="903.98" y="107.8" width="2.00" height="9.3" fill="#7a2cf2"/><rect x="906.68" y="107.8" width="1.1" height="9.3" fill="#f2ffff"/><rect x="908.25" y="107.8" width="0.8" height="9.3" fill="#3ae85e"/><rect x="909.25" y="107.8" width="1.30" height="9.3" fill="#8436f4"/><rect x="911.95" y="107.8" width="1.1" height="9.3" fill="#f2ffff"/><rect x="913.52" y="107.8" width="0.8" height="9.3" fill="#3ae85e"/><rect x="914.52" y="107.8" width="1.30" height="9.3" fill="#8436f4"/><rect x="919.42" y="107.8" width="1.60" height="9.3" fill="#7a2cf2"/><rect x="922.12" y="107.8" width="1.1" height="9.3" fill="#f2ffff"/><rect x="924.32" y="107.8" width="1.60" height="9.3" fill="#7a2cf2"/><rect x="927.02" y="107.8" width="1.1" height="9.3" fill="#f2ffff"/><rect x="929.59" y="107.8" width="2.00" height="9.3" fill="#8436f4"/><rect x="932.29" y="107.8" width="1.1" height="9.3" fill="#f2ffff"/><rect x="934.86" y="107.8" width="1.30" height="9.3" fill="#8436f4"/><rect x="938.76" y="107.8" width="0.8" height="9.3" fill="#3ae85e"/><rect x="939.76" y="107.8" width="1.30" height="9.3" fill="#8436f4"/><rect x="942.46" y="107.8" width="1.1" height="9.3" fill="#f2ffff"/><rect x="945.03" y="107.8" width="1.30" height="9.3" fill="#6d28e6"/><rect x="947.73" y="107.8" width="1.1" height="9.3" fill="#f2ffff"/><rect x="949.30" y="107.8" width="0.8" height="9.3" fill="#3ae85e"/><rect x="950.30" y="107.8" width="1.60" height="9.3" fill="#8436f4"/><rect x="954.57" y="107.8" width="0.8" height="9.3" fill="#3ae85e"/><rect x="955.57" y="107.8" width="1.60" height="9.3" fill="#7a2cf2"/><rect x="958.27" y="107.8" width="1.1" height="9.3" fill="#f2ffff"/><rect x="960.84" y="107.8" width="1.60" height="9.3" fill="#7a2cf2"/><rect x="963.54" y="107.8" width="1.1" height="9.3" fill="#f2ffff"/><rect x="965.11" y="107.8" width="0.8" height="9.3" fill="#3ae85e"/><rect x="966.11" y="107.8" width="2.00" height="9.3" fill="#8436f4"/><rect x="968.81" y="107.8" width="1.1" height="9.3" fill="#f2ffff"/><rect x="971.71" y="107.8" width="1.60" height="9.3" fill="#7a2cf2"/><rect x="974.41" y="107.8" width="1.1" height="9.3" fill="#f2ffff"/><rect x="976.98" y="107.8" width="1.30" height="9.3" fill="#8436f4"/><rect x="979.68" y="107.8" width="1.1" height="9.3" fill="#f2ffff"/><rect x="981.58" y="107.8" width="0.8" height="9.3" fill="#3ae85e"/><rect x="982.58" y="107.8" width="1.60" height="9.3" fill="#8436f4"/><rect x="985.28" y="107.8" width="1.1" height="9.3" fill="#f2ffff"/><rect x="986.85" y="107.8" width="0.8" height="9.3" fill="#3ae85e"/><rect x="987.85" y="107.8" width="1.30" height="9.3" fill="#8436f4"/><rect x="990.55" y="107.8" width="1.1" height="9.3" fill="#f2ffff"/><rect x="993.12" y="107.8" width="1.60" height="9.3" fill="#8436f4"/><rect x="997.39" y="107.8" width="0.8" height="9.3" fill="#3ae85e"/><rect x="998.39" y="107.8" width="1.30" height="9.3" fill="#7a2cf2"/><rect x="1001.09" y="107.8" width="1.1" height="9.3" fill="#f2ffff"/><rect x="1002.99" y="107.8" width="0.8" height="9.3" fill="#3ae85e"/><rect x="1003.99" y="107.8" width="1.30" height="9.3" fill="#8436f4"/><rect x="1006.69" y="107.8" width="1.1" height="9.3" fill="#f2ffff"/><rect x="1009.59" y="107.8" width="2.00" height="9.3" fill="#8436f4"/><rect x="1012.29" y="107.8" width="1.1" height="9.3" fill="#f2ffff"/><rect x="1014.49" y="107.8" width="1.30" height="9.3" fill="#8436f4"/><rect x="1017.19" y="107.8" width="1.1" height="9.3" fill="#f2ffff"/><rect x="1019.09" y="107.8" width="0.8" height="9.3" fill="#3ae85e"/><rect x="1020.09" y="107.8" width="1.60" height="9.3" fill="#7a2cf2"/><rect x="1022.79" y="107.8" width="1.1" height="9.3" fill="#f2ffff"/><rect x="1024.99" y="107.8" width="1.60" height="9.3" fill="#8436f4"/><rect x="1027.69" y="107.8" width="1.1" height="9.3" fill="#f2ffff"/><rect x="1030.26" y="107.8" width="1.60" height="9.3" fill="#6d28e6"/><rect x="1032.96" y="107.8" width="1.1" height="9.3" fill="#f2ffff"/><rect x="1034.16" y="107.8" width="0.8" height="9.3" fill="#3ae85e"/><rect x="1035.16" y="107.8" width="1.60" height="9.3" fill="#7a2cf2"/><rect x="1037.86" y="107.8" width="1.1" height="9.3" fill="#f2ffff"/><rect x="1040.43" y="107.8" width="1.30" height="9.3" fill="#7a2cf2"/><rect x="1043.13" y="107.8" width="1.1" height="9.3" fill="#f2ffff"/><rect x="1045.33" y="107.8" width="1.60" height="9.3" fill="#8436f4"/><rect x="1050.93" y="107.8" width="1.60" height="9.3" fill="#7a2cf2"/><rect x="1053.63" y="107.8" width="1.1" height="9.3" fill="#f2ffff"/><rect x="1056.20" y="107.8" width="2.00" height="9.3" fill="#7a2cf2"/><rect x="1058.90" y="107.8" width="1.1" height="9.3" fill="#f2ffff"/><rect x="1060.47" y="107.8" width="0.8" height="9.3" fill="#3ae85e"/><rect x="1061.47" y="107.8" width="1.60" height="9.3" fill="#8436f4"/><rect x="1066.74" y="107.8" width="1.60" height="9.3" fill="#7a2cf2"/><rect x="1069.44" y="107.8" width="1.1" height="9.3" fill="#f2ffff"/><rect x="1071.01" y="107.8" width="0.8" height="9.3" fill="#3ae85e"/><rect x="1072.01" y="107.8" width="1.60" height="9.3" fill="#6d28e6"/><rect x="1074.71" y="107.8" width="1.1" height="9.3" fill="#f2ffff"/><rect x="1075.91" y="107.8" width="0.8" height="9.3" fill="#3ae85e"/><rect x="1076.91" y="107.8" width="1.30" height="9.3" fill="#7a2cf2"/><rect x="1079.61" y="107.8" width="1.1" height="9.3" fill="#f2ffff"/><rect x="1081.51" y="107.8" width="0.8" height="9.3" fill="#3ae85e"/><rect x="1082.51" y="107.8" width="1.60" height="9.3" fill="#8436f4"/><rect x="1087.41" y="107.8" width="1.30" height="9.3" fill="#7a2cf2"/><rect x="1090.11" y="107.8" width="1.1" height="9.3" fill="#f2ffff"/><rect x="1092.68" y="107.8" width="2.00" height="9.3" fill="#6d28e6"/><rect x="1097.95" y="107.8" width="1.60" height="9.3" fill="#8436f4"/><rect x="1100.65" y="107.8" width="1.1" height="9.3" fill="#f2ffff"/><rect x="1101.85" y="107.8" width="0.8" height="9.3" fill="#3ae85e"/><rect x="1102.85" y="107.8" width="2.00" height="9.3" fill="#8436f4"/><rect x="1105.55" y="107.8" width="1.1" height="9.3" fill="#f2ffff"/><rect x="1107.12" y="107.8" width="0.8" height="9.3" fill="#3ae85e"/><rect x="1108.12" y="107.8" width="1.30" height="9.3" fill="#7a2cf2"/><rect x="1110.82" y="107.8" width="1.1" height="9.3" fill="#f2ffff"/><rect x="1113.39" y="107.8" width="1.60" height="9.3" fill="#7a2cf2"/><rect x="1116.09" y="107.8" width="1.1" height="9.3" fill="#f2ffff"/><rect x="1118.66" y="107.8" width="2.00" height="9.3" fill="#7a2cf2"/><rect x="1121.36" y="107.8" width="1.1" height="9.3" fill="#f2ffff"/><rect x="1123.93" y="107.8" width="1.30" height="9.3" fill="#8436f4"/><rect x="1127.83" y="107.8" width="0.8" height="9.3" fill="#3ae85e"/><rect x="1128.83" y="107.8" width="1.60" height="9.3" fill="#7a2cf2"/><rect x="1133.43" y="107.8" width="0.8" height="9.3" fill="#3ae85e"/><rect x="1134.43" y="107.8" width="1.30" height="9.3" fill="#6d28e6"/><rect x="1139.33" y="107.8" width="1.60" height="9.3" fill="#6d28e6"/><rect x="1143.23" y="107.8" width="0.8" height="9.3" fill="#3ae85e"/><rect x="1144.23" y="107.8" width="2.00" height="9.3" fill="#7a2cf2"/><rect x="1146.93" y="107.8" width="1.1" height="9.3" fill="#f2ffff"/><rect x="1149.50" y="107.8" width="1.30" height="9.3" fill="#7a2cf2"/><rect x="1152.20" y="107.8" width="1.1" height="9.3" fill="#f2ffff"/><rect x="1153.77" y="107.8" width="0.8" height="9.3" fill="#3ae85e"/><rect x="1154.77" y="107.8" width="1.60" height="9.3" fill="#7a2cf2"/><rect x="1157.47" y="107.8" width="1.1" height="9.3" fill="#f2ffff"/><rect x="1160.04" y="107.8" width="1.30" height="9.3" fill="#8436f4"/><rect x="1162.74" y="107.8" width="1.1" height="9.3" fill="#f2ffff"/><rect x="1164.31" y="107.8" width="0.8" height="9.3" fill="#3ae85e"/><rect x="1165.31" y="107.8" width="1.30" height="9.3" fill="#7a2cf2"/><rect x="1168.01" y="107.8" width="1.1" height="9.3" fill="#f2ffff"/><rect x="1169.58" y="107.8" width="0.8" height="9.3" fill="#3ae85e"/><rect x="1170.58" y="107.8" width="1.30" height="9.3" fill="#8436f4"/><rect x="1173.28" y="107.8" width="1.1" height="9.3" fill="#f2ffff"/><rect x="1175.18" y="107.8" width="0.8" height="9.3" fill="#3ae85e"/><rect x="1176.18" y="107.8" width="2.00" height="9.3" fill="#6d28e6"/><rect x="1178.88" y="107.8" width="1.1" height="9.3" fill="#f2ffff"/><rect x="1180.45" y="107.8" width="0.8" height="9.3" fill="#3ae85e"/><rect x="1181.45" y="107.8" width="1.60" height="9.3" fill="#8436f4"/><rect x="1184.15" y="107.8" width="1.1" height="9.3" fill="#f2ffff"/><rect x="1185.72" y="107.8" width="0.8" height="9.3" fill="#3ae85e"/><rect x="1186.72" y="107.8" width="1.60" height="9.3" fill="#6d28e6"/><rect x="1189.42" y="107.8" width="1.1" height="9.3" fill="#f2ffff"/><rect x="1190.62" y="107.8" width="0.8" height="9.3" fill="#3ae85e"/><rect x="1191.62" y="107.8" width="1.30" height="9.3" fill="#8436f4"/><rect x="1194.32" y="107.8" width="1.1" height="9.3" fill="#f2ffff"/><rect x="1196.22" y="107.8" width="0.8" height="9.3" fill="#3ae85e"/><rect x="1197.22" y="107.8" width="1.30" height="9.3" fill="#7a2cf2"/><rect x="1199.92" y="107.8" width="1.1" height="9.3" fill="#f2ffff"/><rect x="1201.82" y="107.8" width="0.8" height="9.3" fill="#3ae85e"/><rect x="1202.82" y="107.8" width="1.30" height="9.3" fill="#8436f4"/><rect x="1205.52" y="107.8" width="1.1" height="9.3" fill="#f2ffff"/><rect x="1206.72" y="107.8" width="0.8" height="9.3" fill="#3ae85e"/><rect x="1207.72" y="107.8" width="1.30" height="9.3" fill="#7a2cf2"/><rect x="1210.42" y="107.8" width="1.1" height="9.3" fill="#f2ffff"/><rect x="1211.99" y="107.8" width="0.8" height="9.3" fill="#3ae85e"/><rect x="1212.99" y="107.8" width="1.30" height="9.3" fill="#6d28e6"/><rect x="1215.69" y="107.8" width="1.1" height="9.3" fill="#f2ffff"/><rect x="1217.59" y="107.8" width="0.8" height="9.3" fill="#3ae85e"/><rect x="1218.59" y="107.8" width="1.30" height="9.3" fill="#8436f4"/><rect x="1221.29" y="107.8" width="1.1" height="9.3" fill="#f2ffff"/><rect x="1222.86" y="107.8" width="0.8" height="9.3" fill="#3ae85e"/><rect x="1223.86" y="107.8" width="1.30" height="9.3" fill="#8436f4"/><rect x="1226.56" y="107.8" width="1.1" height="9.3" fill="#f2ffff"/><rect x="1228.76" y="107.8" width="1.60" height="9.3" fill="#7a2cf2"/><rect x="1233.03" y="107.8" width="0.8" height="9.3" fill="#3ae85e"/><rect x="1234.03" y="107.8" width="1.60" height="9.3" fill="#7a2cf2"/><rect x="1236.73" y="107.8" width="1.1" height="9.3" fill="#f2ffff"/><rect x="1239.63" y="107.8" width="2.00" height="9.3" fill="#6d28e6"/><rect x="1242.33" y="107.8" width="1.1" height="9.3" fill="#f2ffff"/><rect x="1244.53" y="107.8" width="2.00" height="9.3" fill="#8436f4"/><rect x="1247.23" y="107.8" width="1.1" height="9.3" fill="#f2ffff"/><rect x="1248.80" y="107.8" width="0.8" height="9.3" fill="#3ae85e"/><rect x="1249.80" y="107.8" width="1.30" height="9.3" fill="#6d28e6"/><rect x="1252.50" y="107.8" width="1.1" height="9.3" fill="#f2ffff"/><rect x="1254.40" y="107.8" width="0.8" height="9.3" fill="#3ae85e"/><rect x="1255.40" y="107.8" width="1.60" height="9.3" fill="#8436f4"/><rect x="1258.10" y="107.8" width="1.1" height="9.3" fill="#f2ffff"/><rect x="1259.67" y="107.8" width="0.8" height="9.3" fill="#3ae85e"/><rect x="1260.67" y="107.8" width="1.30" height="9.3" fill="#6d28e6"/><rect x="1265.94" y="107.8" width="1.30" height="9.3" fill="#8436f4"/><rect x="1268.64" y="107.8" width="1.1" height="9.3" fill="#f2ffff"/><rect x="1271.21" y="107.8" width="2.00" height="9.3" fill="#8436f4"/><rect x="1273.91" y="107.8" width="1.1" height="9.3" fill="#f2ffff"/><rect x="1275.48" y="107.8" width="0.8" height="9.3" fill="#3ae85e"/><rect x="1276.48" y="107.8" width="2.00" height="9.3" fill="#8436f4"/><rect x="1279.18" y="107.8" width="1.1" height="9.3" fill="#f2ffff"/><rect x="1281.08" y="107.8" width="0.8" height="9.3" fill="#3ae85e"/><rect x="1000.5" y="107.8" width="1" height="9.3" fill="#ff2a2a"/><path d="M644.0 135.8H1276.8" stroke="#d863a6" stroke-width="1.1" fill="none"/><path d="M711.0 135.7L713.2 131.4H735.3L737.5 135.7L735.3 140.0H713.2Z" fill="#333333" stroke="#8f8a22" stroke-width="1"/><text x="724.2" y="138.2" text-anchor="middle" font-family="Liberation Sans, DejaVu Sans, sans-serif" font-weight="bold" font-size="8" fill="#fff">...</text><path d="M737.5 135.7L739.7 131.4H777.8L780.0 135.7L777.8 140.0H739.7Z" fill="#333333" stroke="#1fb5c4" stroke-width="1"/><text x="758.8" y="138.7" text-anchor="middle" font-family="Liberation Sans, DejaVu Sans, sans-serif" font-weight="bold" font-size="8" fill="#fff">D:075h</text><path d="M780.0 135.7L782.2 131.4H798.8L801.0 135.7L798.8 140.0H782.2Z" fill="#333333" stroke="#7a34d8" stroke-width="1"/><text x="790.5" y="138.2" text-anchor="middle" font-family="Liberation Sans, DejaVu Sans, sans-serif" font-weight="bold" font-size="8" fill="#fff">...</text><path d="M807.5 135.7L809.7 131.4H831.8L834.0 135.7L831.8 140.0H809.7Z" fill="#333333" stroke="#8f8a22" stroke-width="1"/><text x="820.8" y="138.2" text-anchor="middle" font-family="Liberation Sans, DejaVu Sans, sans-serif" font-weight="bold" font-size="8" fill="#fff">...</text><path d="M834.0 135.7L836.2 131.4H874.8L877.0 135.7L874.8 140.0H836.2Z" fill="#333333" stroke="#1fb5c4" stroke-width="1"/><text x="855.5" y="138.7" text-anchor="middle" font-family="Liberation Sans, DejaVu Sans, sans-serif" font-weight="bold" font-size="8" fill="#fff">D:075h</text><path d="M877.0 135.7L879.2 131.4H895.8L898.0 135.7L895.8 140.0H879.2Z" fill="#333333" stroke="#7a34d8" stroke-width="1"/><text x="887.5" y="138.2" text-anchor="middle" font-family="Liberation Sans, DejaVu Sans, sans-serif" font-weight="bold" font-size="8" fill="#fff">...</text><path d="M903.5 135.7L905.7 131.4H928.8L931.0 135.7L928.8 140.0H905.7Z" fill="#333333" stroke="#8f8a22" stroke-width="1"/><text x="917.2" y="138.7" text-anchor="middle" font-family="Liberation Sans, DejaVu Sans, sans-serif" font-weight="bold" font-size="8" fill="#fff">07h</text><path d="M931.0 135.7L933.2 131.4H971.3L973.5 135.7L971.3 140.0H933.2Z" fill="#333333" stroke="#1fb5c4" stroke-width="1"/><text x="952.2" y="138.7" text-anchor="middle" font-family="Liberation Sans, DejaVu Sans, sans-serif" font-weight="bold" font-size="8" fill="#fff">D:075h</text><path d="M973.5 135.7L975.7 131.4H992.8L995.0 135.7L992.8 140.0H975.7Z" fill="#333333" stroke="#7a34d8" stroke-width="1"/><text x="984.2" y="138.2" text-anchor="middle" font-family="Liberation Sans, DejaVu Sans, sans-serif" font-weight="bold" font-size="8" fill="#fff">...</text><path d="M1148.5 135.7L1150.7 131.4H1173.8L1176.0 135.7L1173.8 140.0H1150.7Z" fill="#333333" stroke="#8f8a22" stroke-width="1"/><text x="1162.2" y="138.7" text-anchor="middle" font-family="Liberation Sans, DejaVu Sans, sans-serif" font-weight="bold" font-size="8" fill="#fff">07h</text><path d="M1176.0 135.7L1178.2 131.4H1216.3L1218.5 135.7L1216.3 140.0H1178.2Z" fill="#333333" stroke="#1fb5c4" stroke-width="1"/><text x="1197.2" y="138.7" text-anchor="middle" font-family="Liberation Sans, DejaVu Sans, sans-serif" font-weight="bold" font-size="8" fill="#fff">D:075h</text><path d="M1218.5 135.7L1220.7 131.4H1237.8L1240.0 135.7L1237.8 140.0H1220.7Z" fill="#333333" stroke="#7a34d8" stroke-width="1"/><text x="1229.2" y="138.2" text-anchor="middle" font-family="Liberation Sans, DejaVu Sans, sans-serif" font-weight="bold" font-size="8" fill="#fff">...</text><path d="M658.0 43.6H678.0L670.6 53.8L668.0 50.2L665.4 53.8Z" fill="#cf80bd"/><path d="M755.3 43.6H775.3L767.9 53.8L765.3 50.2L762.7 53.8Z" fill="#cf80bd"/><path d="M852.3 43.6H872.3L864.9 53.8L862.3 50.2L859.7 53.8Z" fill="#cf80bd"/><path d="M949.6 43.6H969.6L962.2 53.8L959.6 50.2L957.0 53.8Z" fill="#cf80bd"/><path d="M1097.3 43.6H1117.3L1109.9 53.8L1107.3 50.2L1104.7 53.8Z" fill="#cf80bd"/><path d="M1194.3 43.6H1214.3L1206.9 53.8L1204.3 50.2L1201.7 53.8Z" fill="#cf80bd"/><rect x="708.4" y="43.6" width="8.6" height="137.4" fill="#c9c9c9" opacity="0.62"/><rect x="708.4" y="43.6" width="8.6" height="19" fill="#a4a4a4"/><rect x="708.4" y="157.4" width="8.6" height="23.6" fill="#a4a4a4" opacity="0.9"/><rect x="711.6" y="48" width="1.7" height="15" fill="#151515"/><rect x="711.8" y="63" width="1.3" height="94" fill="#e4e0b0" opacity="0.55"/><path d="M646.6 107H656.5L660.6 111.8L656.5 116.6H646.6Z" fill="#cc99ff"/><text x="652" y="114.6" text-anchor="middle" font-family="DejaVu Sans, sans-serif" font-weight="bold" font-size="6.8" fill="#6a3a30">B1</text><path d="M646.6 141.6H656.2L660.2 145.9L656.2 150.2H646.6Z" fill="#4a4822"/><text x="652.4" y="148.8" text-anchor="middle" font-family="DejaVu Sans, sans-serif" font-weight="bold" font-size="6.2" fill="#d8d030">C 1</text><path d="M953.6 51.4H967V65.2H962.6L960.3 70.6L958 65.2H953.6Z" fill="#000" stroke="#ff9322" stroke-width="1.2"/><path d="M950 43.6H969.4L962.4 53L959.7 50.6L957 53Z" fill="#cf80bd"/><text x="960.3" y="63.2" text-anchor="middle" font-family="Liberation Sans, DejaVu Sans, sans-serif" font-weight="bold" font-size="10.5" fill="#ff9322">T</text><path d="M960.4 72V172" stroke="#e8e8e8" stroke-width="1" stroke-dasharray="3 2" opacity="0.7"/><path d="M1247.2 48.4H1270.2Q1271.6 48.4 1271.6 49.8V73L1247.2 48.4Z" fill="#4b4b4b" stroke="#14a9da" stroke-width="1.3" stroke-linejoin="round"/><circle cx="1266.4" cy="53.4" r="3" fill="none" stroke="#14a9da" stroke-width="1.1"/><path d="M1264.2 55.8L1259.4 60.4" stroke="#14a9da" stroke-width="2" stroke-linecap="round"/></g></svg>
<div class="t" style="left:556.90px;width:300px;text-align:center;top:164.00px;font:normal 9.5px/20px 'DejaVu Sans Condensed','DejaVu Sans','Liberation Sans',sans-serif;color:#cfcfcf;">-40 ms</div>
<div class="t" style="left:619.95px;width:300px;text-align:center;top:164.00px;font:normal 9.5px/20px 'DejaVu Sans Condensed','DejaVu Sans','Liberation Sans',sans-serif;color:#cfcfcf;">-30 ms</div>
<div class="t" style="left:683.00px;width:300px;text-align:center;top:164.00px;font:normal 9.5px/20px 'DejaVu Sans Condensed','DejaVu Sans','Liberation Sans',sans-serif;color:#cfcfcf;">-20 ms</div>
<div class="t" style="left:746.05px;width:300px;text-align:center;top:164.00px;font:normal 9.5px/20px 'DejaVu Sans Condensed','DejaVu Sans','Liberation Sans',sans-serif;color:#cfcfcf;">-10 ms</div>
<div class="t" style="left:809.90px;width:300px;text-align:center;top:164.00px;font:normal 9.5px/20px 'DejaVu Sans Condensed','DejaVu Sans','Liberation Sans',sans-serif;color:#cfcfcf;">0 s</div>
<div class="t" style="left:872.95px;width:300px;text-align:center;top:164.00px;font:normal 9.5px/20px 'DejaVu Sans Condensed','DejaVu Sans','Liberation Sans',sans-serif;color:#cfcfcf;">10 ms</div>
<div class="t" style="left:936.00px;width:300px;text-align:center;top:164.00px;font:normal 9.5px/20px 'DejaVu Sans Condensed','DejaVu Sans','Liberation Sans',sans-serif;color:#cfcfcf;">20 ms</div>
<div class="t" style="left:999.05px;width:300px;text-align:center;top:164.00px;font:normal 9.5px/20px 'DejaVu Sans Condensed','DejaVu Sans','Liberation Sans',sans-serif;color:#cfcfcf;">30 ms</div>
<div class="t" style="left:1062.10px;width:300px;text-align:center;top:164.00px;font:normal 9.5px/20px 'DejaVu Sans Condensed','DejaVu Sans','Liberation Sans',sans-serif;color:#cfcfcf;">40 ms</div>
<div style="left:644.00px;top:181.00px;width:632.80px;height:17.80px;background:#5e6160;"></div>
<div class="t" style="left:653.60px;top:180.00px;font:normal 9.6px/20px 'DejaVu Sans Condensed','DejaVu Sans','Liberation Sans',sans-serif;color:#0c0c0c;">Horizontal Zoom Scale</div>
<div style="left:759.60px;top:183.20px;width:67.20px;height:13.00px;background:#dcdcdc;border-radius:2.5px;"></div>
<div class="t" style="left:765.80px;top:180.00px;font:normal 9.2px/20px 'DejaVu Sans Condensed','DejaVu Sans','Liberation Sans',sans-serif;color:#0c0c0c;">100.00 us/div</div>
<div style="left:837.80px;top:183.80px;width:27.20px;height:12.20px;background:linear-gradient(#454545,#353535);border-radius:2.5px;border:1px solid #4a4a4a;"></div><svg style="left:846.9px;top:185.4px" width="9" height="9"><path d="M4.5 0V9M0 4.5H9" stroke="#8e8e8e" stroke-width="1.3"/></svg>
<div style="left:878.20px;top:183.80px;width:26.80px;height:12.20px;background:linear-gradient(#454545,#353535);border-radius:2.5px;border:1px solid #4a4a4a;"></div><svg style="left:887.1px;top:185.4px" width="9" height="9"><path d="M0 4.5H9" stroke="#8e8e8e" stroke-width="1.3"/></svg>
<div class="t" style="left:913.80px;top:180.00px;font:normal 9.4px/20px 'DejaVu Sans Condensed','DejaVu Sans','Liberation Sans',sans-serif;color:#0c0c0c;">(100.00x zoom)</div>
<div class="t" style="left:996.20px;top:180.00px;font:normal 9.75px/20px 'DejaVu Sans Condensed','DejaVu Sans','Liberation Sans',sans-serif;color:#0c0c0c;">Vertical Zoom</div>
<div style="left:1065.80px;top:183.80px;width:27.00px;height:12.20px;background:linear-gradient(#454545,#353535);border-radius:2.5px;border:1px solid #4a4a4a;"></div><svg style="left:1074.8px;top:185.4px" width="9" height="9"><path d="M4.5 0V9M0 4.5H9" stroke="#8e8e8e" stroke-width="1.3"/></svg>
<div style="left:1105.80px;top:183.80px;width:27.00px;height:12.20px;background:linear-gradient(#454545,#353535);border-radius:2.5px;border:1px solid #4a4a4a;"></div><svg style="left:1114.8px;top:185.4px" width="9" height="9"><path d="M0 4.5H9" stroke="#8e8e8e" stroke-width="1.3"/></svg>
<div class="t" style="left:1142.00px;top:180.00px;font:normal 9.4px/20px 'DejaVu Sans Condensed','DejaVu Sans','Liberation Sans',sans-serif;color:#0c0c0c;">(1.00x zoom)</div>
<svg style="left:1261.6px;top:184.8px" width="10" height="10"><path d="M0.5 0.5L9.5 9.5M9.5 0.5L0.5 9.5" stroke="#e6e6e6" stroke-width="1.3"/></svg>
<div style="left:644.00px;top:198.80px;width:632.80px;height:530.00px;background:#000;"></div>
<svg style="left:0;top:0" width="1410" height="795" viewBox="0 0 1410 795"><clipPath id="gc"><rect x="644.0" y="198.8" width="632.8" height="530.0"/></clipPath><g clip-path="url(#gc)"><path d="M660.20 199V727M723.46 199V713M786.72 199V713M849.98 199V713M913.24 199V713M976.50 199V713M1039.76 199V713M1103.02 199V713M1166.28 199V713M1229.54 199V713" stroke="#828282" stroke-width="1" stroke-dasharray="1 4.29" stroke-dashoffset="-2.3" fill="none"/><path d="M596.44 211.40H1280M596.44 237.84H1280M596.44 264.28H1280M596.44 290.72H1280M596.44 317.16H1280M596.44 343.60H1280M596.44 370.04H1280M596.44 396.48H1280M596.44 422.92H1280M596.44 449.36H1280" stroke="#9a9a9a" stroke-width="1" stroke-dasharray="1 11.652" fill="none"/><path d="M660.20 199V200.6M723.46 199V200.6M786.72 199V200.6M849.98 199V200.6M913.24 199V200.6M976.50 199V200.6M1039.76 199V200.6M1103.02 199V200.6M1166.28 199V200.6M1229.54 199V200.6" stroke="#aaa" stroke-width="1" fill="none"/><path d="M644.0 396.5H1276.8" stroke="#6a6a6a" stroke-width="1" stroke-dasharray="4.4 2.9" fill="none"/><rect x="644.0" y="462.4" width="632.8" height="1.6" fill="#6a6a6a"/><path d="M644.0 238.1L644.9 239.7L645.8 239.4L646.7 238.7L647.6 240.1L648.5 240.2L649.4 239.3L650.3 238.5L651.2 239.3L652.1 238.3L653.0 238.4L653.9 239.2L654.8 238.3L655.7 239.2L656.6 239.4L657.5 238.2L658.4 239.8L659.3 238.3L660.2 240.0L661.1 240.1L662.0 239.4L662.9 238.2L663.8 239.4L664.7 239.1L665.6 240.6L666.5 238.4L667.4 240.4L668.3 240.7L669.2 240.0L670.1 240.3L671.0 238.6L671.9 240.7L672.6 239.4M672.6 413.6L673.5 415.1L674.4 415.1L675.3 413.1L676.2 414.9L677.1 415.3L678.0 413.0L678.9 413.8L679.8 414.9L680.7 413.3L681.6 415.3L682.0 414.2M682.0 240.4L682.9 241.5L683.8 239.5L684.7 240.2L685.6 241.2L686.5 239.1L687.4 239.2L688.3 239.7L689.2 239.2L690.1 238.4L691.0 238.7L691.9 238.6L692.8 240.7L693.7 240.0L694.6 240.5L695.5 238.6L696.4 240.2L697.3 238.4L698.2 239.5L699.1 239.8L700.0 239.0L700.9 240.4L701.8 239.6L702.7 239.6L703.6 240.4L704.5 238.3L705.4 240.7L706.3 239.8L707.2 239.1L708.1 240.2L709.0 238.8L709.9 240.7L710.6 239.4M710.6 413.8L711.5 413.4L712.4 414.7L713.3 413.9L714.2 413.2L715.1 414.8L716.0 412.9L716.9 415.0L717.8 413.5L718.7 414.6L719.6 415.5L720.2 414.2M720.2 241.2L721.1 241.1L722.0 239.9L722.9 238.9L723.8 238.8L724.7 239.0L725.6 240.1L726.5 239.5L727.4 239.7L728.3 240.7L729.2 238.6L730.1 238.8L731.0 239.9L731.9 238.2L732.8 238.1L733.7 239.1L734.6 238.4L735.5 239.0L736.4 238.7L737.3 239.6L738.2 239.7L739.1 238.6L740.0 239.7L740.9 239.3L741.8 238.4L742.7 240.6L743.6 238.7L744.5 238.5L745.4 238.3L746.3 239.8L747.2 240.4L748.1 240.2L749.0 239.1L749.9 238.8L750.2 239.4M750.2 412.3L751.1 414.2L752.0 414.1L752.9 413.6L753.8 414.5L754.7 414.0L755.6 415.3L756.5 414.8L757.4 413.5L758.3 415.3L759.2 413.0L759.8 414.2M759.8 241.1L760.7 240.4L761.6 239.7L762.5 239.0L763.4 240.8L764.3 238.6L765.2 240.0L766.1 240.9L767.0 238.7L767.9 238.8L768.8 239.9L769.7 239.6L770.6 239.9L771.5 240.3L772.4 238.6L773.3 238.9L774.2 238.9L775.1 238.2L776.0 240.5L776.9 240.2L777.8 240.0L778.7 238.1L779.6 240.3L780.5 240.1L781.4 239.3L782.3 240.1L782.6 239.4M782.6 413.5L783.5 413.1L784.4 412.9L785.3 413.3L786.2 412.9L787.1 413.7L788.0 414.8L788.9 414.7L789.8 415.1L790.7 414.8L791.6 413.6L791.6 414.2M791.6 241.1L792.5 240.5L793.4 241.2L794.3 240.3L795.2 239.4L796.1 240.3L797.0 241.1L797.9 239.0L798.8 240.7L799.7 238.3L800.6 238.9L801.5 238.8L802.4 240.2L803.3 240.7L804.2 240.1L805.1 239.0L806.0 240.5L806.9 239.0L807.8 238.7L808.7 240.5L809.6 239.8L810.5 239.9L811.4 239.9L812.3 240.7L813.2 239.3L814.1 240.3L815.0 239.9L815.9 240.4L816.8 239.2L817.7 240.0L818.6 239.6L819.5 238.9L820.4 238.6L821.3 239.7L822.2 238.3L823.1 240.5L824.0 238.4L824.9 238.1L825.8 238.3L826.7 240.6L827.6 239.0L828.5 238.4L829.4 238.1L830.3 238.2L830.3 239.4M830.3 414.1L831.2 414.2L832.1 414.5L833.0 414.7L833.9 412.9L834.8 414.4L835.7 413.8L836.6 415.0L837.5 415.0L838.4 415.2L839.3 413.0L839.8 414.2M839.8 242.0L840.7 241.8L841.6 241.6L842.5 239.2L843.4 239.3L844.3 238.9L845.2 238.6L846.1 240.7L847.0 240.5L847.9 240.0L848.8 240.4L849.7 239.9L850.6 238.9L851.5 238.4L852.4 238.4L853.3 240.1L854.2 238.6L855.1 238.9L856.0 239.2L856.9 238.1L857.8 238.8L858.7 238.8L859.6 240.0L860.5 239.1L860.8 239.4M860.8 413.1L861.7 415.1L862.6 414.0L863.5 415.0L864.4 414.4L865.3 412.9L866.2 413.9L867.1 414.0L868.0 414.9L868.9 413.8L869.8 414.7L870.1 414.2M870.1 241.1L871.0 239.9L871.9 241.4L872.8 239.1L873.7 240.9L874.6 239.0L875.5 238.5L876.4 238.9L877.3 240.4L878.2 240.9L879.1 238.2L880.0 239.5L880.9 239.5L881.8 240.3L882.7 238.6L883.6 239.4L884.5 239.0L885.4 240.3L886.3 238.8L887.2 240.6L888.1 238.8L889.0 238.6L889.9 239.9L890.8 239.4L891.7 238.4L892.6 239.8L893.3 239.4M893.3 412.5L894.2 414.6L895.1 414.5L896.0 414.8L896.9 414.4L897.8 413.7L898.7 413.9L899.6 413.9L900.5 415.2L901.4 413.1L902.0 414.2M902.0 242.0L902.9 239.4L903.8 239.6L904.7 239.6L905.6 241.1L906.5 239.9L907.4 239.5L908.3 240.8L909.2 238.9L910.1 239.5L911.0 239.7L911.9 240.2L912.8 240.2L913.7 239.9L914.6 239.1L915.5 239.0L916.4 238.5L917.3 240.4L918.2 239.9L919.1 240.1L920.0 238.5L920.9 239.2L921.8 240.1L922.7 239.6L923.6 238.4L924.5 239.3L925.4 240.4L926.3 238.7L927.2 238.6L928.1 238.9L929.0 240.0L929.9 240.3L930.8 238.5L931.7 238.5L932.6 238.7L933.5 238.9L934.4 239.5L934.8 239.4M934.8 412.7L935.7 413.4L936.6 413.1L937.5 415.3L938.4 414.7L939.3 413.1L940.2 415.4L941.1 413.1L942.0 413.9L942.9 415.5L943.8 415.0L944.3 414.2M944.3 241.6L945.2 240.5L946.1 239.6L947.0 240.6L947.9 239.0L948.8 239.1L949.7 239.5L950.6 238.5L951.5 239.4L952.4 240.4L953.3 240.1L954.2 239.5L955.1 239.9L956.0 239.4L956.9 238.5L957.8 239.7L958.7 239.2L959.6 240.1L960.5 240.5L961.4 239.2L962.3 239.6L963.2 240.1L964.1 239.2L965.0 238.7L965.9 240.0L966.8 240.4L967.7 240.1L968.6 239.9L969.5 240.4L970.4 239.9L971.3 239.8L972.2 239.3L973.1 238.9L974.0 239.7L974.9 238.3L975.8 239.2L976.7 240.2L977.6 240.0L978.5 239.8L979.4 238.7L979.4 239.4M979.4 413.4L980.3 413.7L981.2 414.3L982.1 413.8L983.0 414.6L983.9 415.3L984.8 413.3L985.7 414.6L986.6 414.9L987.5 413.9L988.4 414.2L989.0 414.2M989.0 242.3L989.9 239.4L990.8 240.5L991.7 239.3L992.6 240.8L993.5 241.1L994.4 239.9L995.3 238.7L996.2 239.9L997.1 239.7L998.0 240.2L998.9 239.6L999.8 239.9L1000.7 240.4L1001.6 239.5L1002.5 239.2L1003.4 240.7L1004.3 238.7L1005.2 239.9L1006.1 239.1L1007.0 240.1L1007.9 238.4L1008.8 240.7L1009.7 239.0L1010.6 238.2L1011.5 238.8L1012.4 239.1L1013.3 238.1L1014.2 239.2L1015.1 239.2L1016.0 239.9L1016.9 239.0L1017.8 238.8L1018.7 238.7L1019.6 240.1L1020.5 240.6L1021.4 239.5L1022.3 238.6L1023.2 240.2L1024.1 239.1L1025.0 238.6L1025.9 238.4L1026.8 240.1L1027.7 240.2L1028.6 239.8L1029.5 239.3L1030.4 239.6L1031.3 238.7L1032.2 240.7L1033.1 239.0L1034.0 239.8L1034.9 240.3L1035.8 240.3L1036.7 239.3L1037.6 238.8L1038.5 239.5L1039.4 238.4L1040.3 240.3L1041.2 239.0L1042.1 240.3L1043.0 238.8L1043.9 239.1L1044.8 238.7L1045.7 239.2L1046.6 238.6L1047.5 238.1L1048.4 240.0L1049.3 238.8L1050.2 238.7L1051.1 238.9L1052.0 239.3L1052.9 239.2L1053.8 239.8L1054.7 239.8L1055.6 239.0L1056.5 240.6L1057.4 240.4L1058.3 238.2L1059.2 240.3L1060.1 240.5L1061.0 240.2L1061.9 238.4L1062.8 240.3L1063.7 239.8L1064.6 238.1L1065.5 238.1L1066.4 240.6L1067.3 239.8L1068.2 238.7L1069.1 238.3L1070.0 238.4L1070.9 238.7L1071.8 240.1L1072.7 239.0L1073.6 238.5L1074.5 240.5L1075.4 240.2L1076.3 238.5L1077.2 240.5L1078.1 239.7L1079.0 240.2L1079.9 239.9L1080.8 240.5L1081.7 240.2L1082.6 240.3L1083.5 238.6L1084.4 239.9L1085.3 239.5L1086.2 240.1L1087.1 239.2L1088.0 240.4L1088.9 239.5L1089.8 238.8L1090.7 238.7L1091.6 238.4L1092.5 239.4L1093.4 238.2L1094.3 239.3L1095.2 238.4L1096.1 239.4L1097.0 239.4L1097.9 239.5L1098.8 240.4L1099.7 238.1L1100.6 240.3L1101.5 239.3L1102.4 239.6L1103.3 239.8L1104.2 240.3L1105.1 239.1L1105.7 239.4M1105.7 413.4L1106.6 415.1L1107.5 412.8L1108.4 414.4L1109.3 414.5L1110.2 412.9L1111.1 414.5L1112.0 414.7L1112.9 415.3L1113.8 413.7L1114.7 414.2M1114.7 242.3L1115.6 240.7L1116.5 240.4L1117.4 241.3L1118.3 238.8L1119.2 240.5L1120.1 240.2L1121.0 239.3L1121.9 240.6L1122.8 239.2L1123.7 239.5L1124.6 239.6L1125.5 240.2L1126.4 238.7L1127.3 239.3L1128.2 239.2L1129.1 239.6L1130.0 240.3L1130.9 238.9L1131.8 240.3L1132.7 239.2L1133.6 239.4L1134.5 238.8L1135.4 239.4L1136.3 240.7L1137.2 239.8L1138.1 240.2L1139.0 238.9L1139.9 238.9L1140.8 238.9L1141.7 239.6L1142.6 239.8L1143.5 240.2L1144.4 238.2L1145.3 240.0L1146.2 240.4L1147.1 239.5L1148.0 238.2L1148.9 238.9L1149.8 238.1L1150.7 238.6L1151.6 240.5L1152.5 239.7L1153.4 239.8L1154.3 240.2L1155.2 240.5L1156.1 239.7L1157.0 239.7L1157.9 239.7L1158.8 239.9L1159.7 239.7L1160.6 239.9L1161.5 238.6L1162.4 239.9L1163.3 239.3L1164.2 240.1L1165.1 238.3L1166.0 238.5L1166.9 238.1L1167.8 240.1L1168.7 240.5L1169.6 239.8L1170.5 239.0L1171.4 240.3L1172.3 240.2L1173.2 239.6L1174.1 238.7L1175.0 238.9L1175.9 239.2L1176.8 238.9L1177.7 239.2L1178.6 239.8L1179.5 240.6L1180.4 238.2L1181.3 239.6L1182.2 238.2L1183.1 238.4L1184.0 240.2L1184.9 239.6L1185.8 240.5L1186.7 239.3L1187.6 238.1L1188.5 239.1L1189.4 239.6L1190.3 240.6L1191.2 240.7L1192.1 239.3L1193.0 239.2L1193.9 238.3L1194.8 239.8L1195.7 238.6L1196.6 238.5L1197.5 238.1L1198.4 238.1L1199.3 239.9L1200.2 238.4L1201.1 240.7L1202.0 238.3L1202.9 240.4L1203.8 238.4L1204.7 238.1L1205.6 240.0L1206.5 238.7L1207.4 240.0L1208.3 238.6L1209.2 238.2L1210.1 240.1L1211.0 240.0L1211.7 239.4M1211.7 414.6L1212.6 414.4L1213.5 412.8L1214.4 414.4L1215.3 414.7L1216.2 414.0L1217.1 415.3L1218.0 413.5L1218.9 415.4L1219.8 414.8L1220.7 412.9L1221.5 414.2M1221.5 239.7L1222.4 241.1L1223.3 241.3L1224.2 239.1L1225.1 239.5L1226.0 240.5L1226.9 238.9L1227.8 240.7L1228.7 239.6L1229.6 238.4L1230.5 239.2L1231.4 239.7L1232.3 239.3L1233.2 240.0L1234.1 238.5L1235.0 240.3L1235.9 239.1L1236.8 239.8L1237.7 239.8L1238.6 239.2L1239.5 239.1L1240.4 240.2L1241.3 240.6L1242.2 240.2L1243.1 239.6L1244.0 238.8L1244.9 238.2L1245.8 240.7L1246.7 240.0L1247.6 240.3L1248.5 238.9L1249.4 239.7L1249.6 239.4M1249.6 414.9L1250.5 414.7L1251.4 414.2L1252.3 413.5L1253.2 413.9L1254.1 415.2L1255.0 413.8L1255.9 414.7L1256.8 414.5L1257.7 415.3L1258.6 415.0L1259.2 414.2M1259.2 240.4L1260.1 239.3L1261.0 239.8L1261.9 240.0L1262.8 240.3L1263.7 240.8L1264.6 240.9L1265.5 238.5L1266.4 240.6L1267.3 240.5L1268.2 240.6L1269.1 239.7L1270.0 238.9L1270.9 240.4L1271.8 240.3L1272.7 239.4M1272.7 414.1L1273.6 414.9L1274.5 413.5L1275.4 412.9L1276.3 414.2L1277.2 414.9L1278.1 413.4L1278.8 414.2" stroke="#f4ec1c" stroke-width="1.45" fill="none" stroke-linejoin="round"/><path d="M672.6 239.4V414.2M710.6 239.4V414.2M750.2 239.4V414.2M782.6 239.4V414.2M830.3 239.4V414.2M860.8 239.4V414.2M893.3 239.4V414.2M934.8 239.4V414.2M979.4 239.4V414.2M1105.7 239.4V414.2M1211.7 239.4V414.2M1249.6 239.4V414.2M1272.7 239.4V414.2" stroke="#efe700" stroke-width="1.1" fill="none"/><path d="M682.0 414.2V239.4M720.2 414.2V239.4M759.8 414.2V239.4M791.6 414.2V239.4M839.8 414.2V239.4M870.1 414.2V239.4M902.0 414.2V239.4M944.3 414.2V239.4M989.0 414.2V239.4M1114.7 414.2V239.4M1221.5 414.2V239.4M1259.2 414.2V239.4" stroke="#8f8a00" stroke-width="1.4" fill="none"/><path d="M682.0 414.2V239.4M720.2 414.2V239.4M759.8 414.2V239.4M791.6 414.2V239.4M839.8 414.2V239.4M870.1 414.2V239.4M902.0 414.2V239.4M944.3 414.2V239.4M989.0 414.2V239.4M1114.7 414.2V239.4M1221.5 414.2V239.4M1259.2 414.2V239.4" stroke="#e6de00" stroke-width="0.7" fill="none" opacity="0.22"/><path d="M647 387.4H663.2L671.6 396.5L663.2 405.6H647Q646.2 405.6 646.2 404.8V388.2Q646.2 387.4 647 387.4Z" fill="#1c1b08" stroke="#d6ce20" stroke-width="1.1"/><text x="657.8" y="399.9" text-anchor="middle" font-family="DejaVu Sans Condensed, DejaVu Sans, sans-serif" font-size="9.4" fill="#e2da2a" letter-spacing="0.3">C 1</text><path d="M639.0 587.9H668.6L672.0 596.8L668.6 605.6H639.0" fill="#000" stroke="#07a010" stroke-width="1.25"/><path d="M672.2 596.8L675.6 587.9H706.2L709.6 596.8L706.2 605.6H675.6Z" fill="#000" stroke="#5207a8" stroke-width="1.25"/><path d="M710.2 596.8L713.6 587.9H826.6L830.0 596.8L826.6 605.6H713.6Z" fill="#000" stroke="#0a98a8" stroke-width="1.25"/><path d="M830.6 596.8L834.0 587.9H931.2L934.6 596.8L931.2 605.6H834.0Z" fill="#000" stroke="#0a98a8" stroke-width="1.25"/><path d="M935.2 596.8L938.6 587.9H976.2L979.6 596.8L976.2 605.6H938.6Z" fill="#000" stroke="#5207a8" stroke-width="1.25"/><path d="M980.2 596.8L983.6 587.9H1101.4L1104.8 596.8L1101.4 605.6H983.6Z" fill="#000" stroke="#5207a8" stroke-width="1.25"/><path d="M1105.4 596.8L1108.8 587.9H1208.6L1212.0 596.8L1208.6 605.6H1108.8Z" fill="#000" stroke="#07a010" stroke-width="1.25"/><path d="M1212.6 596.8L1216.0 587.9H1245.8L1249.2 596.8L1245.8 605.6H1216.0Z" fill="#000" stroke="#5207a8" stroke-width="1.25"/><path d="M1281.8 587.9H1253.2L1249.8 596.8L1253.2 605.6H1281.8" fill="#000" stroke="#0a98a8" stroke-width="1.25"/><text x="770.0" y="603.0" text-anchor="middle" font-family="Liberation Sans, DejaVu Sans, sans-serif" font-weight="bold" font-size="16.5" fill="#fff">C1:95Dh</text><text x="882.8" y="603.0" text-anchor="middle" font-family="Liberation Sans, DejaVu Sans, sans-serif" font-weight="bold" font-size="16.5" fill="#fff">C2:A54h</text><text x="957.2" y="603.0" text-anchor="middle" font-family="Liberation Sans, DejaVu Sans, sans-serif" font-weight="bold" font-size="16.5" fill="#fff">Ch</text><text x="1042.4" y="603.0" text-anchor="middle" font-family="Liberation Sans, DejaVu Sans, sans-serif" font-weight="bold" font-size="16.5" fill="#fff">Pause:54</text><text x="1158.6" y="603.0" text-anchor="middle" font-family="Liberation Sans, DejaVu Sans, sans-serif" font-weight="bold" font-size="16.5" fill="#fff">Sync</text><text x="1230.6" y="603.0" text-anchor="middle" font-family="Liberation Sans, DejaVu Sans, sans-serif" font-weight="bold" font-size="16.5" fill="#fff">...</text><text x="1263.6" y="603.0" text-anchor="middle" font-family="Liberation Sans, DejaVu Sans, sans-serif" font-weight="bold" font-size="16.5" fill="#fff">...</text><rect x="681.2" y="590.4" width="27.2" height="13.2" rx="1.2" fill="#2b2b2b" stroke="#3c3c3c" stroke-width="0.8"/><path d="M695 592.6V601.6M690.4 597.1H699.6" stroke="#8c8c8c" stroke-width="1.3"/><path d="M686 601.2h1.4M689.6 601.2h1.4M693.6 601.2h1.4" stroke="#777" stroke-width="1.3"/><path d="M647.2 588.3H663.2L671.4 596.8L663.2 605.3H647.2Q646.6 605.3 646.6 604.7V588.9Q646.6 588.3 647.2 588.3Z" fill="#cc99ff"/><text x="656.2" y="600" text-anchor="middle" font-family="DejaVu Sans, sans-serif" font-weight="bold" font-size="7.6" fill="#5a3246">B1</text><text x="680.4" y="585.7" font-family="DejaVu Sans, sans-serif" font-size="12" fill="#c68ff0" textLength="31.6" lengthAdjust="spacingAndGlyphs">SENT</text><path d="M644.0 629.1H681.8" stroke="#ff14dc" stroke-width="2.7"/><path d="M1281.8 619.8H685.4L681.8 629.0L685.4 638.3H1281.8" fill="#000" stroke="#a29a06" stroke-width="1.25"/><text x="978.0" y="635.4" text-anchor="middle" font-family="Liberation Sans, DejaVu Sans, sans-serif" font-weight="bold" font-size="16.5" fill="#fff">ID:07h</text></g></svg>
<div class="t" style="right:136.60px;top:202.00px;font:normal 9.4px/20px 'DejaVu Sans Condensed','DejaVu Sans','Liberation Sans',sans-serif;color:#c9c11c;">2.1 V</div>
<div class="t" style="right:136.60px;top:228.00px;font:normal 9.4px/20px 'DejaVu Sans Condensed','DejaVu Sans','Liberation Sans',sans-serif;color:#c9c11c;">1.8 V</div>
<div class="t" style="right:136.60px;top:255.00px;font:normal 9.4px/20px 'DejaVu Sans Condensed','DejaVu Sans','Liberation Sans',sans-serif;color:#c9c11c;">1.5 V</div>
<div class="t" style="right:136.60px;top:281.00px;font:normal 9.4px/20px 'DejaVu Sans Condensed','DejaVu Sans','Liberation Sans',sans-serif;color:#c9c11c;">1.2 V</div>
<div class="t" style="right:136.60px;top:308.00px;font:normal 9.4px/20px 'DejaVu Sans Condensed','DejaVu Sans','Liberation Sans',sans-serif;color:#c9c11c;">900 mV</div>
<div class="t" style="right:136.60px;top:334.00px;font:normal 9.4px/20px 'DejaVu Sans Condensed','DejaVu Sans','Liberation Sans',sans-serif;color:#c9c11c;">600 mV</div>
<div class="t" style="right:136.60px;top:360.00px;font:normal 9.4px/20px 'DejaVu Sans Condensed','DejaVu Sans','Liberation Sans',sans-serif;color:#c9c11c;">300 mV</div>
<div class="t" style="right:136.60px;top:387.00px;font:normal 9.4px/20px 'DejaVu Sans Condensed','DejaVu Sans','Liberation Sans',sans-serif;color:#c9c11c;">0 V</div>
<div class="t" style="right:136.60px;top:413.00px;font:normal 9.4px/20px 'DejaVu Sans Condensed','DejaVu Sans','Liberation Sans',sans-serif;color:#c9c11c;">-300 mV</div>
<div class="t" style="right:136.60px;top:440.00px;font:normal 9.4px/20px 'DejaVu Sans Condensed','DejaVu Sans','Liberation Sans',sans-serif;color:#c9c11c;">-600 mV</div>
<div class="t" style="left:572.86px;width:300px;text-align:center;top:712.00px;font:normal 9.7px/20px 'DejaVu Sans Condensed','DejaVu Sans','Liberation Sans',sans-serif;color:#b4b4b4;">-39.5 ms</div>
<div class="t" style="left:636.12px;width:300px;text-align:center;top:712.00px;font:normal 9.7px/20px 'DejaVu Sans Condensed','DejaVu Sans','Liberation Sans',sans-serif;color:#b4b4b4;">-39.4 ms</div>
<div class="t" style="left:699.38px;width:300px;text-align:center;top:712.00px;font:normal 9.7px/20px 'DejaVu Sans Condensed','DejaVu Sans','Liberation Sans',sans-serif;color:#b4b4b4;">-39.3 ms</div>
<div class="t" style="left:762.64px;width:300px;text-align:center;top:712.00px;font:normal 9.7px/20px 'DejaVu Sans Condensed','DejaVu Sans','Liberation Sans',sans-serif;color:#b4b4b4;">-39.2 ms</div>
<div class="t" style="left:825.90px;width:300px;text-align:center;top:712.00px;font:normal 9.7px/20px 'DejaVu Sans Condensed','DejaVu Sans','Liberation Sans',sans-serif;color:#b4b4b4;">-39.1 ms</div>
<div class="t" style="left:889.16px;width:300px;text-align:center;top:712.00px;font:normal 9.7px/20px 'DejaVu Sans Condensed','DejaVu Sans','Liberation Sans',sans-serif;color:#b4b4b4;">-39 ms</div>
<div class="t" style="left:952.42px;width:300px;text-align:center;top:712.00px;font:normal 9.7px/20px 'DejaVu Sans Condensed','DejaVu Sans','Liberation Sans',sans-serif;color:#b4b4b4;">-38.9 ms</div>
<div class="t" style="left:1015.68px;width:300px;text-align:center;top:712.00px;font:normal 9.7px/20px 'DejaVu Sans Condensed','DejaVu Sans','Liberation Sans',sans-serif;color:#b4b4b4;">-38.8 ms</div>
<div class="t" style="left:1078.94px;width:300px;text-align:center;top:712.00px;font:normal 9.7px/20px 'DejaVu Sans Condensed','DejaVu Sans','Liberation Sans',sans-serif;color:#b4b4b4;">-38.7 ms</div>
<div style="left:1283.00px;top:369.00px;width:3.00px;height:3.00px;background:#cfcfcf;border-radius:50%;"></div>
<div style="left:1283.00px;top:375.50px;width:3.00px;height:3.00px;background:#cfcfcf;border-radius:50%;"></div>
<div style="left:1283.00px;top:381.90px;width:3.00px;height:3.00px;background:#cfcfcf;border-radius:50%;"></div>
<div style="left:1290.20px;top:23.40px;width:117.10px;height:708.20px;border-left:1px solid #474341;border-top:1px solid #474341;border-bottom:1.6px solid #454545;"></div>
<div class="t" style="left:1198.60px;width:300px;text-align:center;top:20.00px;font:bold 10.3px/20px 'DejaVu Sans Condensed','DejaVu Sans','Liberation Sans',sans-serif;color:#fff;">Add New...</div>
<div class="btn" style="left:1295.10px;top:43.30px;width:45.90px;height:26.60px;"></div><div class="t" style="left:1168.05px;width:300px;text-align:center;top:47.00px;font:normal 11px/20px 'DejaVu Sans Condensed','DejaVu Sans','Liberation Sans',sans-serif;color:#f4f4f4;letter-spacing:0px;">Cursors</div>
<div class="btn" style="left:1347.00px;top:43.30px;width:46.00px;height:26.60px;"></div><div class="t" style="left:1220.00px;width:300px;text-align:center;top:47.00px;font:normal 11px/20px 'DejaVu Sans Condensed','DejaVu Sans','Liberation Sans',sans-serif;color:#f4f4f4;letter-spacing:0px;">Note</div>
<div class="btn" style="left:1295.10px;top:76.10px;width:45.90px;height:26.60px;"></div><div class="t" style="left:1168.05px;width:300px;text-align:center;top:80.00px;font:normal 11px/20px 'DejaVu Sans Condensed','DejaVu Sans','Liberation Sans',sans-serif;color:#f4f4f4;letter-spacing:0.15px;">Measure</div>
<div class="btn" style="left:1347.00px;top:76.10px;width:46.00px;height:26.60px;"></div><div class="t" style="left:1220.00px;width:300px;text-align:center;top:80.00px;font:normal 11px/20px 'DejaVu Sans Condensed','DejaVu Sans','Liberation Sans',sans-serif;color:#f4f4f4;letter-spacing:0px;">Search</div>
<div class="btn" style="left:1295.10px;top:108.80px;width:45.90px;height:26.70px;"></div><div class="t" style="left:1168.05px;width:300px;text-align:center;top:106.00px;font:normal 10.8px/20px 'DejaVu Sans Condensed','DejaVu Sans','Liberation Sans',sans-serif;color:#f4f4f4;">Results</div><div class="t" style="left:1168.05px;width:300px;text-align:center;top:118.00px;font:normal 10.8px/20px 'DejaVu Sans Condensed','DejaVu Sans','Liberation Sans',sans-serif;color:#f4f4f4;">Table</div>
<div class="btn" style="left:1347.00px;top:108.80px;width:46.00px;height:26.70px;"></div><div class="t" style="left:1220.00px;width:300px;text-align:center;top:112.00px;font:normal 11.6px/20px 'DejaVu Sans Condensed','DejaVu Sans','Liberation Sans',sans-serif;color:#f4f4f4;letter-spacing:0px;">Plot</div>
<div style="left:1293.20px;top:141.30px;width:105.60px;height:0.90px;background:#5c534d;"></div>
<div class="badge" style="left:1293.10px;top:149.90px;width:112.10px;height:57.20px;"><div style="left:0;top:0;width:100%;height:12.8px;background:#000"></div></div>
<div class="t" style="left:1297.60px;top:147.00px;font:normal 9.6px/20px 'DejaVu Sans','Liberation Sans',sans-serif;color:#b58ff0;">Search 1</div>
<div style="left:1385.30px;top:153.20px;width:15.00px;height:7.40px;background:#cc99ff;border-radius:1.5px;"></div>
<div class="t" style="left:1242.80px;width:300px;text-align:center;top:148.00px;font:normal 6.6px/20px 'DejaVu Sans','Liberation Sans',sans-serif;color:#50305a;">B1</div>
<div class="t" style="left:1298.20px;top:163.00px;font:normal 9.7px/20px 'DejaVu Sans','Liberation Sans',sans-serif;color:#141414;letter-spacing:-0.2px;">Bus: SENT</div>
<div class="t" style="left:1298.20px;top:177.00px;font:normal 9.7px/20px 'DejaVu Sans','Liberation Sans',sans-serif;color:#141414;letter-spacing:-0.2px;">Search: Bus</div>
<div class="t" style="left:1298.20px;top:191.00px;font:normal 9.7px/20px 'DejaVu Sans','Liberation Sans',sans-serif;color:#141414;letter-spacing:-0.2px;">Events: 6</div>
<svg style="left:1383.6px;top:182px" width="13" height="11"><path d="M0.2 0.2H12.6L6.4 10.2Z" fill="#cf80c0"/></svg>
<div style="left:1293.20px;top:693.20px;width:106.00px;height:0.90px;background:#6a5f57;"></div>
<div class="btn" style="left:1295.10px;top:700.20px;width:46.00px;height:26.80px;"></div>
<svg style="left:1300px;top:698px" width="40" height="32" viewBox="1300 698 40 32">
<g fill="#b9b9b9"><rect x="1308.8" y="704.1" width="1.6" height="1.6"/><rect x="1312.4" y="704.3" width="1.3" height="1.2" opacity=".7"/><rect x="1315.7" y="704.3" width="1.2" height="1.2" opacity=".7"/><rect x="1318.7" y="704.1" width="1.6" height="1.6"/>
<rect x="1309.1" y="708" width="1" height="1" opacity=".7"/><rect x="1309.1" y="711.2" width="1" height="1" opacity=".6"/><rect x="1319.1" y="707.8" width="1.1" height="1.1" opacity=".8"/>
<rect x="1308.8" y="714.2" width="1.6" height="1.6"/><rect x="1312" y="714.5" width="1.2" height="1.2" opacity=".7"/></g>
<circle cx="1319.2" cy="714.8" r="3.9" fill="#2a2a2a" stroke="#dcdcdc" stroke-width="1.15"/>
<circle cx="1319.2" cy="714.8" r="2.1" fill="#8a8a8a"/>
<path d="M1322.3 717.9L1326.3 721.7" stroke="#dcdcdc" stroke-width="2.5" stroke-linecap="round"/>
<path d="M1322.9 718.5L1326 721.4" stroke="#7c7c7c" stroke-width="0.8" stroke-linecap="round"/>
</svg>
<svg style="left:1364px;top:699px" width="26" height="29" viewBox="1364 699 26 29">
<path d="M1367.6 706.5L1368.8 722.6Q1369 724 1371 724.5Q1376.6 725.8 1382.2 724.5Q1384.2 724 1384.4 722.6L1385.6 706.5Z" fill="#222" stroke="#d4d4d4" stroke-width="1.1"/>
<path d="M1372.2 709.6L1372.8 722.8M1381 709.6L1380.4 722.8" stroke="#6a6a6a" stroke-width="1.7" fill="none"/>
<path d="M1376.6 709.6V723.6" stroke="#e6e6e6" stroke-width="1" fill="none"/>
<ellipse cx="1376.6" cy="704.7" rx="9.8" ry="3" fill="#262626" stroke="#d4d4d4" stroke-width="1.1"/>
<path d="M1368 705.4Q1376.6 707.6 1385.2 705.4" fill="none" stroke="#bdbdbd" stroke-width="0.8"/>
<path d="M1373.4 703.2Q1376.6 702.4 1379.8 703.2" fill="none" stroke="#9a9a9a" stroke-width="0.8"/>
</svg>
<div class="badge" style="left:6.20px;top:733.40px;width:65.80px;height:58.40px;"><div style="left:0;top:0;width:100%;height:13.4px;background:#4a4822"></div></div><div class="t" style="left:10.80px;top:731.00px;font:normal 9.3px/20px 'DejaVu Sans','Liberation Sans',sans-serif;color:#e6df30;">Ch 1</div>
<div class="t" style="left:11.40px;top:747.00px;font:normal 10.0px/20px 'DejaVu Sans','Liberation Sans',sans-serif;color:#101010;letter-spacing:-0.1px;">300 mV/div</div>
<div class="t" style="left:11.80px;top:762.00px;font:normal 10.0px/20px 'DejaVu Sans','Liberation Sans',sans-serif;color:#101010;letter-spacing:0px;">1 MΩ</div>
<div class="t" style="left:11.40px;top:775.00px;font:normal 10.0px/20px 'DejaVu Sans','Liberation Sans',sans-serif;color:#101010;letter-spacing:0px;">500 MHz</div>
<div class="t" style="left:60.00px;top:773.00px;font:bold 6.2px/20px 'DejaVu Sans','Liberation Sans',sans-serif;color:#222;">B</div>
<div class="t" style="left:64.20px;top:776.00px;font:bold 5.6px/20px 'DejaVu Sans','Liberation Sans',sans-serif;color:#222;">w</div>
<div class="badge" style="left:75.90px;top:733.40px;width:65.70px;height:58.40px;"><div style="left:0;top:0;width:100%;height:13.4px;background:#cc99ff"></div></div><div class="t" style="left:80.50px;top:731.00px;font:normal 9.2px/20px 'DejaVu Sans','Liberation Sans',sans-serif;color:#1a1020;">Bus 1</div>
<div class="t" style="left:80.80px;top:747.00px;font:normal 10.0px/20px 'DejaVu Sans','Liberation Sans',sans-serif;color:#101010;letter-spacing:0px;">SENT</div>
<div class="btn" style="left:388.30px;top:733.40px;width:29.00px;height:58.40px;"></div>
<div style="left:391.10px;top:739.00px;width:23.40px;height:2.20px;background:#22c7d2;"></div>
<div class="t" style="left:252.80px;width:300px;text-align:center;top:751.00px;font:normal 13.8px/20px 'DejaVu Sans','Liberation Sans',sans-serif;color:#f6f6f6;">2</div>
<div class="btn" style="left:421.04px;top:733.40px;width:29.00px;height:58.40px;"></div>
<div style="left:423.84px;top:739.00px;width:23.40px;height:2.20px;background:#e23a5c;"></div>
<div class="t" style="left:285.54px;width:300px;text-align:center;top:751.00px;font:normal 13.8px/20px 'DejaVu Sans','Liberation Sans',sans-serif;color:#f6f6f6;">3</div>
<div class="btn" style="left:453.78px;top:733.40px;width:29.00px;height:58.40px;"></div>
<div style="left:456.58px;top:739.00px;width:23.40px;height:2.20px;background:#8cc822;"></div>
<div class="t" style="left:318.28px;width:300px;text-align:center;top:751.00px;font:normal 13.8px/20px 'DejaVu Sans','Liberation Sans',sans-serif;color:#f6f6f6;">4</div>
<div class="btn" style="left:486.52px;top:733.40px;width:29.00px;height:58.40px;"></div>
<div style="left:489.32px;top:739.00px;width:23.40px;height:2.20px;background:#f19122;"></div>
<div class="t" style="left:351.02px;width:300px;text-align:center;top:751.00px;font:normal 13.8px/20px 'DejaVu Sans','Liberation Sans',sans-serif;color:#f6f6f6;">5</div>
<div class="btn" style="left:519.26px;top:733.40px;width:29.00px;height:58.40px;"></div>
<div style="left:522.06px;top:739.00px;width:23.40px;height:2.20px;background:#2222c8;"></div>
<div class="t" style="left:383.76px;width:300px;text-align:center;top:751.00px;font:normal 13.8px/20px 'DejaVu Sans','Liberation Sans',sans-serif;color:#f6f6f6;">6</div>
<div class="btn" style="left:552.00px;top:733.40px;width:29.00px;height:58.40px;"></div>
<div style="left:554.80px;top:739.00px;width:23.40px;height:2.20px;background:#e244b2;"></div>
<div class="t" style="left:416.50px;width:300px;text-align:center;top:751.00px;font:normal 13.8px/20px 'DejaVu Sans','Liberation Sans',sans-serif;color:#f6f6f6;">7</div>
<div class="btn" style="left:584.74px;top:733.40px;width:29.00px;height:58.40px;"></div>
<div style="left:587.54px;top:739.00px;width:23.40px;height:2.20px;background:#14c890;"></div>
<div class="t" style="left:449.24px;width:300px;text-align:center;top:751.00px;font:normal 13.8px/20px 'DejaVu Sans','Liberation Sans',sans-serif;color:#f6f6f6;">8</div>
<div style="left:622.20px;top:733.60px;width:1.00px;height:58.00px;background:#4c4642;"></div>
<div class="btn" style="left:630.00px;top:733.40px;width:28.90px;height:58.40px;"></div>
<div style="left:632.80px;top:739.00px;width:23.40px;height:2.20px;background:#f19122;"></div>
<div class="t" style="left:494.50px;width:300px;text-align:center;top:742.00px;font:normal 10.5px/20px 'DejaVu Sans','Liberation Sans',sans-serif;color:#f6f6f6;letter-spacing:-0.1px;">Add</div>
<div class="t" style="left:494.50px;width:300px;text-align:center;top:754.00px;font:normal 10.5px/20px 'DejaVu Sans','Liberation Sans',sans-serif;color:#f6f6f6;letter-spacing:-0.1px;">New</div>
<div class="t" style="left:494.50px;width:300px;text-align:center;top:765.00px;font:normal 10.5px/20px 'DejaVu Sans','Liberation Sans',sans-serif;color:#f6f6f6;letter-spacing:-0.1px;">Math</div>
<div class="btn" style="left:662.80px;top:733.40px;width:28.90px;height:58.40px;"></div>
<div style="left:665.60px;top:739.00px;width:23.40px;height:2.20px;background:#c9c9d8;"></div>
<div class="t" style="left:527.30px;width:300px;text-align:center;top:742.00px;font:normal 10.5px/20px 'DejaVu Sans','Liberation Sans',sans-serif;color:#f6f6f6;letter-spacing:-0.1px;">Add</div>
<div class="t" style="left:527.30px;width:300px;text-align:center;top:754.00px;font:normal 10.5px/20px 'DejaVu Sans','Liberation Sans',sans-serif;color:#f6f6f6;letter-spacing:-0.1px;">New</div>
<div class="t" style="left:527.30px;width:300px;text-align:center;top:765.00px;font:normal 10.5px/20px 'DejaVu Sans','Liberation Sans',sans-serif;color:#f6f6f6;letter-spacing:-0.1px;">Ref</div>
<div class="btn" style="left:695.80px;top:733.40px;width:28.90px;height:58.40px;"></div>
<div style="left:698.60px;top:739.00px;width:23.40px;height:2.20px;background:#c46cf4;"></div>
<div class="t" style="left:560.30px;width:300px;text-align:center;top:742.00px;font:normal 10.5px/20px 'DejaVu Sans','Liberation Sans',sans-serif;color:#f6f6f6;letter-spacing:-0.1px;">Add</div>
<div class="t" style="left:560.30px;width:300px;text-align:center;top:754.00px;font:normal 10.5px/20px 'DejaVu Sans','Liberation Sans',sans-serif;color:#f6f6f6;letter-spacing:-0.1px;">New</div>
<div class="t" style="left:560.30px;width:300px;text-align:center;top:765.00px;font:normal 10.5px/20px 'DejaVu Sans','Liberation Sans',sans-serif;color:#f6f6f6;letter-spacing:-0.1px;">Bus</div>
<div style="left:732.20px;top:733.60px;width:1.00px;height:58.00px;background:#4c4642;"></div>
<div class="btn" style="left:739.90px;top:733.40px;width:29.20px;height:58.40px;"></div>
<div style="left:742.80px;top:739.00px;width:23.40px;height:2.00px;background:#474747;"></div>
<div class="t" style="left:604.50px;width:300px;text-align:center;top:755.00px;font:normal 10.8px/20px 'DejaVu Sans','Liberation Sans',sans-serif;color:#f6f6f6;letter-spacing:-0.2px;">DVM</div>
<div class="badge" style="left:776.80px;top:733.40px;width:146.10px;height:58.40px;"><div style="left:0;top:0;width:100%;height:13.4px;background:#58595b"></div></div><div class="t" style="left:781.40px;top:730.00px;font:normal 10.3px/20px 'DejaVu Sans','Liberation Sans',sans-serif;color:#fafafa;">AFG: Arbitrary</div>
<div class="t" style="left:782.00px;top:747.00px;font:normal 10.0px/20px 'DejaVu Sans','Liberation Sans',sans-serif;color:#101010;letter-spacing:0px;">Freq: 10 Hz</div>
<div class="t" style="left:782.00px;top:761.00px;font:normal 10.0px/20px 'DejaVu Sans','Liberation Sans',sans-serif;color:#101010;letter-spacing:0px;">Amp: 2.211 Vpp</div>
<div class="t" style="left:782.00px;top:775.00px;font:normal 10.0px/20px 'DejaVu Sans','Liberation Sans',sans-serif;color:#101010;letter-spacing:0px;">Offset: 783 mV</div>
<div style="left:930.00px;top:733.60px;width:1.00px;height:58.00px;background:#4c4642;"></div>
<div class="badge" style="left:938.20px;top:733.40px;width:148.60px;height:58.40px;"><div style="left:0;top:0;width:100%;height:13.4px;background:#58595b"></div></div><div class="t" style="left:942.80px;top:730.00px;font:normal 10.3px/20px 'DejaVu Sans','Liberation Sans',sans-serif;color:#fafafa;">Horizontal</div>
<div class="t" style="left:943.60px;top:747.00px;font:normal 10.0px/20px 'DejaVu Sans','Liberation Sans',sans-serif;color:#101010;letter-spacing:-0.35px;">10 ms/div</div>
<div class="t" style="left:943.60px;top:761.00px;font:normal 10.0px/20px 'DejaVu Sans','Liberation Sans',sans-serif;color:#101010;letter-spacing:-0.28px;">SR: 12.5 MS/s</div>
<div class="t" style="left:943.60px;top:775.00px;font:normal 10.0px/20px 'DejaVu Sans','Liberation Sans',sans-serif;color:#101010;letter-spacing:-0.1px;">RL: 1.25 Mpts</div>
<div class="t" style="left:1021.60px;top:747.00px;font:normal 10.0px/20px 'DejaVu Sans','Liberation Sans',sans-serif;color:#101010;letter-spacing:-0.4px;">100 ms</div>
<div class="t" style="left:1021.20px;top:761.00px;font:normal 10.0px/20px 'DejaVu Sans','Liberation Sans',sans-serif;color:#101010;letter-spacing:-0.2px;">80 ns/pt</div>
<div class="t" style="left:1031.40px;top:775.00px;font:normal 10.0px/20px 'DejaVu Sans','Liberation Sans',sans-serif;color:#101010;letter-spacing:-0.1px;">50%</div>
<svg style="left:1021px;top:779px" width="7" height="10" viewBox="0 0 7 10"><path d="M0.5 0.5H6.5V6.2H4.6L3.5 9L2.4 6.2H0.5Z" fill="#111" stroke="#f08a1c" stroke-width="0.9"/><path d="M2.2 2.2H4.8M3.5 2.2V5.2" stroke="#ddd" stroke-width="0.9"/></svg>
<div class="badge" style="left:1093.90px;top:733.40px;width:117.30px;height:58.40px;"><div style="left:0;top:0;width:100%;height:13.4px;background:#58595b"></div></div><div class="t" style="left:1098.50px;top:730.00px;font:normal 10.3px/20px 'DejaVu Sans','Liberation Sans',sans-serif;color:#fafafa;">Trigger</div>
<div style="left:1099.00px;top:751.00px;width:22.00px;height:12.30px;background:#cc99ff;border:1px solid #111;border-radius:3.2px;"></div>
<div class="t" style="left:960.00px;width:300px;text-align:center;top:747.00px;font:normal 9.6px/20px 'DejaVu Sans','Liberation Sans',sans-serif;color:#20102a;">B1</div>
<div class="t" style="left:1128.40px;top:747.00px;font:normal 10.0px/20px 'DejaVu Sans','Liberation Sans',sans-serif;color:#101010;letter-spacing:-0.2px;">SENT</div>
<div class="t" style="left:1099.40px;top:761.00px;font:normal 10.0px/20px 'DejaVu Sans','Liberation Sans',sans-serif;color:#101010;letter-spacing:0px;">Fast Channel</div>
<div class="badge" style="left:1218.10px;top:733.40px;width:109.90px;height:58.40px;"><div style="left:0;top:0;width:100%;height:13.4px;background:#58595b"></div></div><div class="t" style="left:1222.70px;top:730.00px;font:normal 10.3px/20px 'DejaVu Sans','Liberation Sans',sans-serif;color:#fafafa;">Acquisition</div>
<div class="t" style="left:1223.40px;top:747.00px;font:normal 10.0px/20px 'DejaVu Sans','Liberation Sans',sans-serif;color:#101010;letter-spacing:0px;">Auto,</div>
<div class="t" style="left:1266.60px;top:747.00px;font:normal 10.0px/20px 'DejaVu Sans','Liberation Sans',sans-serif;color:#101010;letter-spacing:0px;">Analyze</div>
<div class="t" style="left:1223.40px;top:761.00px;font:normal 10.0px/20px 'DejaVu Sans','Liberation Sans',sans-serif;color:#101010;letter-spacing:-0.15px;">Sample: 12 bits</div>
<div class="t" style="left:1223.40px;top:775.00px;font:normal 10.0px/20px 'DejaVu Sans','Liberation Sans',sans-serif;color:#101010;letter-spacing:-0.25px;">Single: 1/1</div>
<div style="left:1335.50px;top:734.00px;width:65.10px;height:25.80px;background:#ff1e28;border-radius:4.5px;border:1px solid #e0202a;"></div>
<div class="t" style="left:1218.00px;width:300px;text-align:center;top:737.00px;font:bold 9.1px/20px 'DejaVu Sans Condensed','DejaVu Sans','Liberation Sans',sans-serif;color:#fff;">Stopped</div>

</body></html>
